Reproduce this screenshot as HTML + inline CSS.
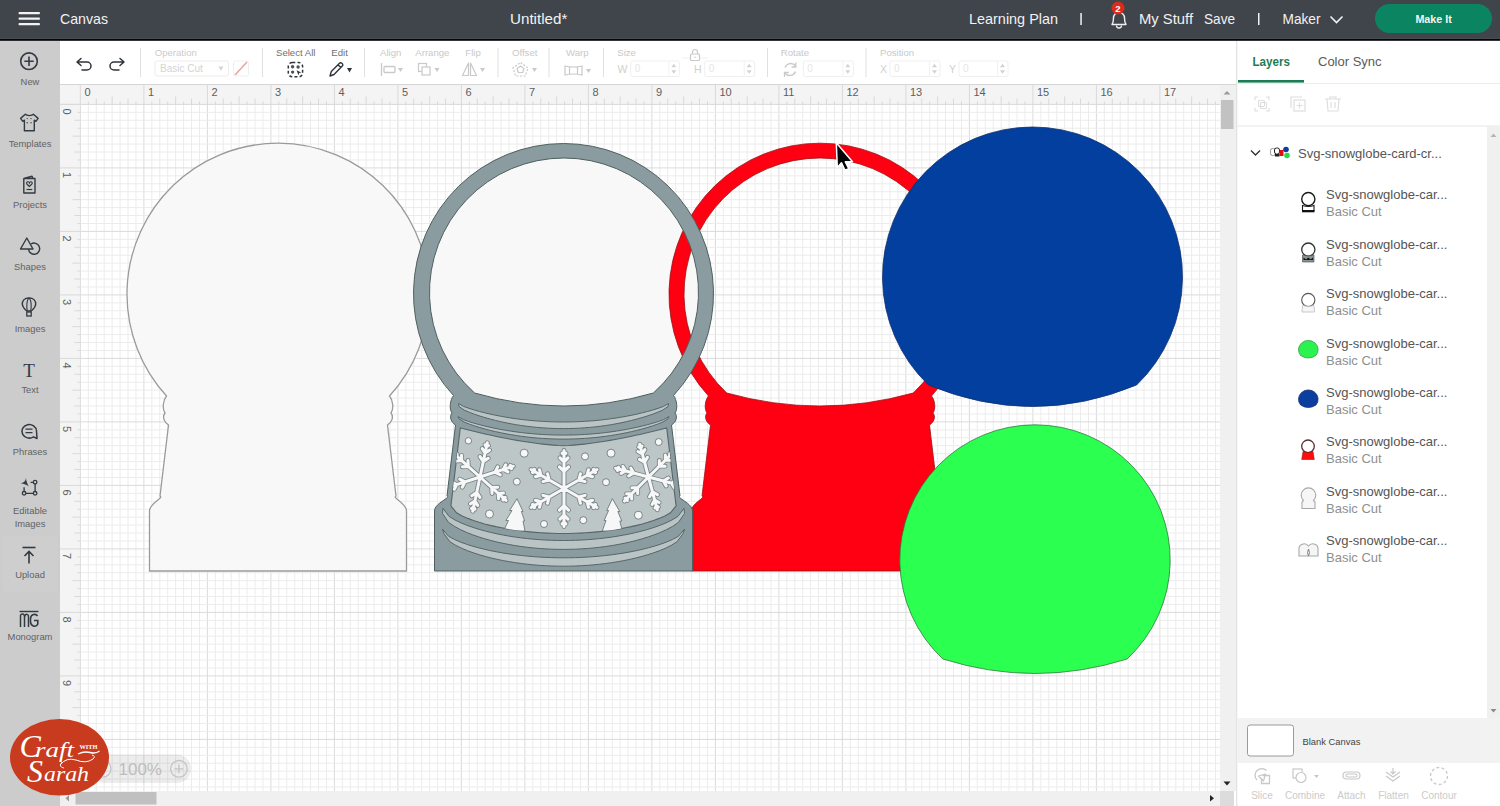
<!DOCTYPE html>
<html><head><meta charset="utf-8">
<style>
*{margin:0;padding:0;box-sizing:border-box}
html,body{width:1500px;height:806px;overflow:hidden;background:#fff;font-family:"Liberation Sans",sans-serif}
.abs{position:absolute}
.tt{position:absolute;color:#f2f2f2;font-size:15px;line-height:15px;top:11px;white-space:nowrap}
.si{position:absolute;left:0;width:60px;text-align:center;font-size:9.4px;line-height:13px;color:#626262;white-space:nowrap}
</style></head><body>
<svg class="abs" style="left:0;top:0" width="1500" height="806" font-family="Liberation Sans, sans-serif">
<rect x="60" y="85" width="1160" height="706" fill="#fff"/>
<line x1="80.40" y1="104.40" x2="80.40" y2="791" stroke="#dbdbdb" stroke-width="1"/>
<line x1="88.34" y1="104.40" x2="88.34" y2="791" stroke="#ececec" stroke-width="1"/>
<line x1="96.28" y1="104.40" x2="96.28" y2="791" stroke="#ececec" stroke-width="1"/>
<line x1="104.21" y1="104.40" x2="104.21" y2="791" stroke="#ececec" stroke-width="1"/>
<line x1="112.15" y1="104.40" x2="112.15" y2="791" stroke="#ececec" stroke-width="1"/>
<line x1="120.09" y1="104.40" x2="120.09" y2="791" stroke="#ececec" stroke-width="1"/>
<line x1="128.03" y1="104.40" x2="128.03" y2="791" stroke="#ececec" stroke-width="1"/>
<line x1="135.96" y1="104.40" x2="135.96" y2="791" stroke="#ececec" stroke-width="1"/>
<line x1="143.90" y1="104.40" x2="143.90" y2="791" stroke="#dbdbdb" stroke-width="1"/>
<line x1="151.84" y1="104.40" x2="151.84" y2="791" stroke="#ececec" stroke-width="1"/>
<line x1="159.78" y1="104.40" x2="159.78" y2="791" stroke="#ececec" stroke-width="1"/>
<line x1="167.71" y1="104.40" x2="167.71" y2="791" stroke="#ececec" stroke-width="1"/>
<line x1="175.65" y1="104.40" x2="175.65" y2="791" stroke="#ececec" stroke-width="1"/>
<line x1="183.59" y1="104.40" x2="183.59" y2="791" stroke="#ececec" stroke-width="1"/>
<line x1="191.53" y1="104.40" x2="191.53" y2="791" stroke="#ececec" stroke-width="1"/>
<line x1="199.46" y1="104.40" x2="199.46" y2="791" stroke="#ececec" stroke-width="1"/>
<line x1="207.40" y1="104.40" x2="207.40" y2="791" stroke="#dbdbdb" stroke-width="1"/>
<line x1="215.34" y1="104.40" x2="215.34" y2="791" stroke="#ececec" stroke-width="1"/>
<line x1="223.28" y1="104.40" x2="223.28" y2="791" stroke="#ececec" stroke-width="1"/>
<line x1="231.21" y1="104.40" x2="231.21" y2="791" stroke="#ececec" stroke-width="1"/>
<line x1="239.15" y1="104.40" x2="239.15" y2="791" stroke="#ececec" stroke-width="1"/>
<line x1="247.09" y1="104.40" x2="247.09" y2="791" stroke="#ececec" stroke-width="1"/>
<line x1="255.03" y1="104.40" x2="255.03" y2="791" stroke="#ececec" stroke-width="1"/>
<line x1="262.96" y1="104.40" x2="262.96" y2="791" stroke="#ececec" stroke-width="1"/>
<line x1="270.90" y1="104.40" x2="270.90" y2="791" stroke="#dbdbdb" stroke-width="1"/>
<line x1="278.84" y1="104.40" x2="278.84" y2="791" stroke="#ececec" stroke-width="1"/>
<line x1="286.77" y1="104.40" x2="286.77" y2="791" stroke="#ececec" stroke-width="1"/>
<line x1="294.71" y1="104.40" x2="294.71" y2="791" stroke="#ececec" stroke-width="1"/>
<line x1="302.65" y1="104.40" x2="302.65" y2="791" stroke="#ececec" stroke-width="1"/>
<line x1="310.59" y1="104.40" x2="310.59" y2="791" stroke="#ececec" stroke-width="1"/>
<line x1="318.52" y1="104.40" x2="318.52" y2="791" stroke="#ececec" stroke-width="1"/>
<line x1="326.46" y1="104.40" x2="326.46" y2="791" stroke="#ececec" stroke-width="1"/>
<line x1="334.40" y1="104.40" x2="334.40" y2="791" stroke="#dbdbdb" stroke-width="1"/>
<line x1="342.34" y1="104.40" x2="342.34" y2="791" stroke="#ececec" stroke-width="1"/>
<line x1="350.27" y1="104.40" x2="350.27" y2="791" stroke="#ececec" stroke-width="1"/>
<line x1="358.21" y1="104.40" x2="358.21" y2="791" stroke="#ececec" stroke-width="1"/>
<line x1="366.15" y1="104.40" x2="366.15" y2="791" stroke="#ececec" stroke-width="1"/>
<line x1="374.09" y1="104.40" x2="374.09" y2="791" stroke="#ececec" stroke-width="1"/>
<line x1="382.02" y1="104.40" x2="382.02" y2="791" stroke="#ececec" stroke-width="1"/>
<line x1="389.96" y1="104.40" x2="389.96" y2="791" stroke="#ececec" stroke-width="1"/>
<line x1="397.90" y1="104.40" x2="397.90" y2="791" stroke="#dbdbdb" stroke-width="1"/>
<line x1="405.84" y1="104.40" x2="405.84" y2="791" stroke="#ececec" stroke-width="1"/>
<line x1="413.77" y1="104.40" x2="413.77" y2="791" stroke="#ececec" stroke-width="1"/>
<line x1="421.71" y1="104.40" x2="421.71" y2="791" stroke="#ececec" stroke-width="1"/>
<line x1="429.65" y1="104.40" x2="429.65" y2="791" stroke="#ececec" stroke-width="1"/>
<line x1="437.59" y1="104.40" x2="437.59" y2="791" stroke="#ececec" stroke-width="1"/>
<line x1="445.52" y1="104.40" x2="445.52" y2="791" stroke="#ececec" stroke-width="1"/>
<line x1="453.46" y1="104.40" x2="453.46" y2="791" stroke="#ececec" stroke-width="1"/>
<line x1="461.40" y1="104.40" x2="461.40" y2="791" stroke="#dbdbdb" stroke-width="1"/>
<line x1="469.34" y1="104.40" x2="469.34" y2="791" stroke="#ececec" stroke-width="1"/>
<line x1="477.27" y1="104.40" x2="477.27" y2="791" stroke="#ececec" stroke-width="1"/>
<line x1="485.21" y1="104.40" x2="485.21" y2="791" stroke="#ececec" stroke-width="1"/>
<line x1="493.15" y1="104.40" x2="493.15" y2="791" stroke="#ececec" stroke-width="1"/>
<line x1="501.09" y1="104.40" x2="501.09" y2="791" stroke="#ececec" stroke-width="1"/>
<line x1="509.02" y1="104.40" x2="509.02" y2="791" stroke="#ececec" stroke-width="1"/>
<line x1="516.96" y1="104.40" x2="516.96" y2="791" stroke="#ececec" stroke-width="1"/>
<line x1="524.90" y1="104.40" x2="524.90" y2="791" stroke="#dbdbdb" stroke-width="1"/>
<line x1="532.84" y1="104.40" x2="532.84" y2="791" stroke="#ececec" stroke-width="1"/>
<line x1="540.77" y1="104.40" x2="540.77" y2="791" stroke="#ececec" stroke-width="1"/>
<line x1="548.71" y1="104.40" x2="548.71" y2="791" stroke="#ececec" stroke-width="1"/>
<line x1="556.65" y1="104.40" x2="556.65" y2="791" stroke="#ececec" stroke-width="1"/>
<line x1="564.59" y1="104.40" x2="564.59" y2="791" stroke="#ececec" stroke-width="1"/>
<line x1="572.52" y1="104.40" x2="572.52" y2="791" stroke="#ececec" stroke-width="1"/>
<line x1="580.46" y1="104.40" x2="580.46" y2="791" stroke="#ececec" stroke-width="1"/>
<line x1="588.40" y1="104.40" x2="588.40" y2="791" stroke="#dbdbdb" stroke-width="1"/>
<line x1="596.34" y1="104.40" x2="596.34" y2="791" stroke="#ececec" stroke-width="1"/>
<line x1="604.27" y1="104.40" x2="604.27" y2="791" stroke="#ececec" stroke-width="1"/>
<line x1="612.21" y1="104.40" x2="612.21" y2="791" stroke="#ececec" stroke-width="1"/>
<line x1="620.15" y1="104.40" x2="620.15" y2="791" stroke="#ececec" stroke-width="1"/>
<line x1="628.09" y1="104.40" x2="628.09" y2="791" stroke="#ececec" stroke-width="1"/>
<line x1="636.02" y1="104.40" x2="636.02" y2="791" stroke="#ececec" stroke-width="1"/>
<line x1="643.96" y1="104.40" x2="643.96" y2="791" stroke="#ececec" stroke-width="1"/>
<line x1="651.90" y1="104.40" x2="651.90" y2="791" stroke="#dbdbdb" stroke-width="1"/>
<line x1="659.84" y1="104.40" x2="659.84" y2="791" stroke="#ececec" stroke-width="1"/>
<line x1="667.77" y1="104.40" x2="667.77" y2="791" stroke="#ececec" stroke-width="1"/>
<line x1="675.71" y1="104.40" x2="675.71" y2="791" stroke="#ececec" stroke-width="1"/>
<line x1="683.65" y1="104.40" x2="683.65" y2="791" stroke="#ececec" stroke-width="1"/>
<line x1="691.59" y1="104.40" x2="691.59" y2="791" stroke="#ececec" stroke-width="1"/>
<line x1="699.52" y1="104.40" x2="699.52" y2="791" stroke="#ececec" stroke-width="1"/>
<line x1="707.46" y1="104.40" x2="707.46" y2="791" stroke="#ececec" stroke-width="1"/>
<line x1="715.40" y1="104.40" x2="715.40" y2="791" stroke="#dbdbdb" stroke-width="1"/>
<line x1="723.34" y1="104.40" x2="723.34" y2="791" stroke="#ececec" stroke-width="1"/>
<line x1="731.27" y1="104.40" x2="731.27" y2="791" stroke="#ececec" stroke-width="1"/>
<line x1="739.21" y1="104.40" x2="739.21" y2="791" stroke="#ececec" stroke-width="1"/>
<line x1="747.15" y1="104.40" x2="747.15" y2="791" stroke="#ececec" stroke-width="1"/>
<line x1="755.09" y1="104.40" x2="755.09" y2="791" stroke="#ececec" stroke-width="1"/>
<line x1="763.02" y1="104.40" x2="763.02" y2="791" stroke="#ececec" stroke-width="1"/>
<line x1="770.96" y1="104.40" x2="770.96" y2="791" stroke="#ececec" stroke-width="1"/>
<line x1="778.90" y1="104.40" x2="778.90" y2="791" stroke="#dbdbdb" stroke-width="1"/>
<line x1="786.84" y1="104.40" x2="786.84" y2="791" stroke="#ececec" stroke-width="1"/>
<line x1="794.77" y1="104.40" x2="794.77" y2="791" stroke="#ececec" stroke-width="1"/>
<line x1="802.71" y1="104.40" x2="802.71" y2="791" stroke="#ececec" stroke-width="1"/>
<line x1="810.65" y1="104.40" x2="810.65" y2="791" stroke="#ececec" stroke-width="1"/>
<line x1="818.59" y1="104.40" x2="818.59" y2="791" stroke="#ececec" stroke-width="1"/>
<line x1="826.52" y1="104.40" x2="826.52" y2="791" stroke="#ececec" stroke-width="1"/>
<line x1="834.46" y1="104.40" x2="834.46" y2="791" stroke="#ececec" stroke-width="1"/>
<line x1="842.40" y1="104.40" x2="842.40" y2="791" stroke="#dbdbdb" stroke-width="1"/>
<line x1="850.34" y1="104.40" x2="850.34" y2="791" stroke="#ececec" stroke-width="1"/>
<line x1="858.27" y1="104.40" x2="858.27" y2="791" stroke="#ececec" stroke-width="1"/>
<line x1="866.21" y1="104.40" x2="866.21" y2="791" stroke="#ececec" stroke-width="1"/>
<line x1="874.15" y1="104.40" x2="874.15" y2="791" stroke="#ececec" stroke-width="1"/>
<line x1="882.09" y1="104.40" x2="882.09" y2="791" stroke="#ececec" stroke-width="1"/>
<line x1="890.02" y1="104.40" x2="890.02" y2="791" stroke="#ececec" stroke-width="1"/>
<line x1="897.96" y1="104.40" x2="897.96" y2="791" stroke="#ececec" stroke-width="1"/>
<line x1="905.90" y1="104.40" x2="905.90" y2="791" stroke="#dbdbdb" stroke-width="1"/>
<line x1="913.84" y1="104.40" x2="913.84" y2="791" stroke="#ececec" stroke-width="1"/>
<line x1="921.77" y1="104.40" x2="921.77" y2="791" stroke="#ececec" stroke-width="1"/>
<line x1="929.71" y1="104.40" x2="929.71" y2="791" stroke="#ececec" stroke-width="1"/>
<line x1="937.65" y1="104.40" x2="937.65" y2="791" stroke="#ececec" stroke-width="1"/>
<line x1="945.59" y1="104.40" x2="945.59" y2="791" stroke="#ececec" stroke-width="1"/>
<line x1="953.52" y1="104.40" x2="953.52" y2="791" stroke="#ececec" stroke-width="1"/>
<line x1="961.46" y1="104.40" x2="961.46" y2="791" stroke="#ececec" stroke-width="1"/>
<line x1="969.40" y1="104.40" x2="969.40" y2="791" stroke="#dbdbdb" stroke-width="1"/>
<line x1="977.34" y1="104.40" x2="977.34" y2="791" stroke="#ececec" stroke-width="1"/>
<line x1="985.27" y1="104.40" x2="985.27" y2="791" stroke="#ececec" stroke-width="1"/>
<line x1="993.21" y1="104.40" x2="993.21" y2="791" stroke="#ececec" stroke-width="1"/>
<line x1="1001.15" y1="104.40" x2="1001.15" y2="791" stroke="#ececec" stroke-width="1"/>
<line x1="1009.09" y1="104.40" x2="1009.09" y2="791" stroke="#ececec" stroke-width="1"/>
<line x1="1017.02" y1="104.40" x2="1017.02" y2="791" stroke="#ececec" stroke-width="1"/>
<line x1="1024.96" y1="104.40" x2="1024.96" y2="791" stroke="#ececec" stroke-width="1"/>
<line x1="1032.90" y1="104.40" x2="1032.90" y2="791" stroke="#dbdbdb" stroke-width="1"/>
<line x1="1040.84" y1="104.40" x2="1040.84" y2="791" stroke="#ececec" stroke-width="1"/>
<line x1="1048.78" y1="104.40" x2="1048.78" y2="791" stroke="#ececec" stroke-width="1"/>
<line x1="1056.71" y1="104.40" x2="1056.71" y2="791" stroke="#ececec" stroke-width="1"/>
<line x1="1064.65" y1="104.40" x2="1064.65" y2="791" stroke="#ececec" stroke-width="1"/>
<line x1="1072.59" y1="104.40" x2="1072.59" y2="791" stroke="#ececec" stroke-width="1"/>
<line x1="1080.53" y1="104.40" x2="1080.53" y2="791" stroke="#ececec" stroke-width="1"/>
<line x1="1088.46" y1="104.40" x2="1088.46" y2="791" stroke="#ececec" stroke-width="1"/>
<line x1="1096.40" y1="104.40" x2="1096.40" y2="791" stroke="#dbdbdb" stroke-width="1"/>
<line x1="1104.34" y1="104.40" x2="1104.34" y2="791" stroke="#ececec" stroke-width="1"/>
<line x1="1112.28" y1="104.40" x2="1112.28" y2="791" stroke="#ececec" stroke-width="1"/>
<line x1="1120.21" y1="104.40" x2="1120.21" y2="791" stroke="#ececec" stroke-width="1"/>
<line x1="1128.15" y1="104.40" x2="1128.15" y2="791" stroke="#ececec" stroke-width="1"/>
<line x1="1136.09" y1="104.40" x2="1136.09" y2="791" stroke="#ececec" stroke-width="1"/>
<line x1="1144.03" y1="104.40" x2="1144.03" y2="791" stroke="#ececec" stroke-width="1"/>
<line x1="1151.96" y1="104.40" x2="1151.96" y2="791" stroke="#ececec" stroke-width="1"/>
<line x1="1159.90" y1="104.40" x2="1159.90" y2="791" stroke="#dbdbdb" stroke-width="1"/>
<line x1="1167.84" y1="104.40" x2="1167.84" y2="791" stroke="#ececec" stroke-width="1"/>
<line x1="1175.78" y1="104.40" x2="1175.78" y2="791" stroke="#ececec" stroke-width="1"/>
<line x1="1183.71" y1="104.40" x2="1183.71" y2="791" stroke="#ececec" stroke-width="1"/>
<line x1="1191.65" y1="104.40" x2="1191.65" y2="791" stroke="#ececec" stroke-width="1"/>
<line x1="1199.59" y1="104.40" x2="1199.59" y2="791" stroke="#ececec" stroke-width="1"/>
<line x1="1207.53" y1="104.40" x2="1207.53" y2="791" stroke="#ececec" stroke-width="1"/>
<line x1="1215.46" y1="104.40" x2="1215.46" y2="791" stroke="#ececec" stroke-width="1"/>
<line x1="80.40" y1="104.40" x2="1220" y2="104.40" stroke="#dbdbdb" stroke-width="1"/>
<line x1="80.40" y1="112.34" x2="1220" y2="112.34" stroke="#ececec" stroke-width="1"/>
<line x1="80.40" y1="120.28" x2="1220" y2="120.28" stroke="#ececec" stroke-width="1"/>
<line x1="80.40" y1="128.21" x2="1220" y2="128.21" stroke="#ececec" stroke-width="1"/>
<line x1="80.40" y1="136.15" x2="1220" y2="136.15" stroke="#ececec" stroke-width="1"/>
<line x1="80.40" y1="144.09" x2="1220" y2="144.09" stroke="#ececec" stroke-width="1"/>
<line x1="80.40" y1="152.03" x2="1220" y2="152.03" stroke="#ececec" stroke-width="1"/>
<line x1="80.40" y1="159.96" x2="1220" y2="159.96" stroke="#ececec" stroke-width="1"/>
<line x1="80.40" y1="167.90" x2="1220" y2="167.90" stroke="#dbdbdb" stroke-width="1"/>
<line x1="80.40" y1="175.84" x2="1220" y2="175.84" stroke="#ececec" stroke-width="1"/>
<line x1="80.40" y1="183.78" x2="1220" y2="183.78" stroke="#ececec" stroke-width="1"/>
<line x1="80.40" y1="191.71" x2="1220" y2="191.71" stroke="#ececec" stroke-width="1"/>
<line x1="80.40" y1="199.65" x2="1220" y2="199.65" stroke="#ececec" stroke-width="1"/>
<line x1="80.40" y1="207.59" x2="1220" y2="207.59" stroke="#ececec" stroke-width="1"/>
<line x1="80.40" y1="215.53" x2="1220" y2="215.53" stroke="#ececec" stroke-width="1"/>
<line x1="80.40" y1="223.46" x2="1220" y2="223.46" stroke="#ececec" stroke-width="1"/>
<line x1="80.40" y1="231.40" x2="1220" y2="231.40" stroke="#dbdbdb" stroke-width="1"/>
<line x1="80.40" y1="239.34" x2="1220" y2="239.34" stroke="#ececec" stroke-width="1"/>
<line x1="80.40" y1="247.28" x2="1220" y2="247.28" stroke="#ececec" stroke-width="1"/>
<line x1="80.40" y1="255.21" x2="1220" y2="255.21" stroke="#ececec" stroke-width="1"/>
<line x1="80.40" y1="263.15" x2="1220" y2="263.15" stroke="#ececec" stroke-width="1"/>
<line x1="80.40" y1="271.09" x2="1220" y2="271.09" stroke="#ececec" stroke-width="1"/>
<line x1="80.40" y1="279.02" x2="1220" y2="279.02" stroke="#ececec" stroke-width="1"/>
<line x1="80.40" y1="286.96" x2="1220" y2="286.96" stroke="#ececec" stroke-width="1"/>
<line x1="80.40" y1="294.90" x2="1220" y2="294.90" stroke="#dbdbdb" stroke-width="1"/>
<line x1="80.40" y1="302.84" x2="1220" y2="302.84" stroke="#ececec" stroke-width="1"/>
<line x1="80.40" y1="310.77" x2="1220" y2="310.77" stroke="#ececec" stroke-width="1"/>
<line x1="80.40" y1="318.71" x2="1220" y2="318.71" stroke="#ececec" stroke-width="1"/>
<line x1="80.40" y1="326.65" x2="1220" y2="326.65" stroke="#ececec" stroke-width="1"/>
<line x1="80.40" y1="334.59" x2="1220" y2="334.59" stroke="#ececec" stroke-width="1"/>
<line x1="80.40" y1="342.52" x2="1220" y2="342.52" stroke="#ececec" stroke-width="1"/>
<line x1="80.40" y1="350.46" x2="1220" y2="350.46" stroke="#ececec" stroke-width="1"/>
<line x1="80.40" y1="358.40" x2="1220" y2="358.40" stroke="#dbdbdb" stroke-width="1"/>
<line x1="80.40" y1="366.34" x2="1220" y2="366.34" stroke="#ececec" stroke-width="1"/>
<line x1="80.40" y1="374.27" x2="1220" y2="374.27" stroke="#ececec" stroke-width="1"/>
<line x1="80.40" y1="382.21" x2="1220" y2="382.21" stroke="#ececec" stroke-width="1"/>
<line x1="80.40" y1="390.15" x2="1220" y2="390.15" stroke="#ececec" stroke-width="1"/>
<line x1="80.40" y1="398.09" x2="1220" y2="398.09" stroke="#ececec" stroke-width="1"/>
<line x1="80.40" y1="406.02" x2="1220" y2="406.02" stroke="#ececec" stroke-width="1"/>
<line x1="80.40" y1="413.96" x2="1220" y2="413.96" stroke="#ececec" stroke-width="1"/>
<line x1="80.40" y1="421.90" x2="1220" y2="421.90" stroke="#dbdbdb" stroke-width="1"/>
<line x1="80.40" y1="429.84" x2="1220" y2="429.84" stroke="#ececec" stroke-width="1"/>
<line x1="80.40" y1="437.77" x2="1220" y2="437.77" stroke="#ececec" stroke-width="1"/>
<line x1="80.40" y1="445.71" x2="1220" y2="445.71" stroke="#ececec" stroke-width="1"/>
<line x1="80.40" y1="453.65" x2="1220" y2="453.65" stroke="#ececec" stroke-width="1"/>
<line x1="80.40" y1="461.59" x2="1220" y2="461.59" stroke="#ececec" stroke-width="1"/>
<line x1="80.40" y1="469.52" x2="1220" y2="469.52" stroke="#ececec" stroke-width="1"/>
<line x1="80.40" y1="477.46" x2="1220" y2="477.46" stroke="#ececec" stroke-width="1"/>
<line x1="80.40" y1="485.40" x2="1220" y2="485.40" stroke="#dbdbdb" stroke-width="1"/>
<line x1="80.40" y1="493.34" x2="1220" y2="493.34" stroke="#ececec" stroke-width="1"/>
<line x1="80.40" y1="501.27" x2="1220" y2="501.27" stroke="#ececec" stroke-width="1"/>
<line x1="80.40" y1="509.21" x2="1220" y2="509.21" stroke="#ececec" stroke-width="1"/>
<line x1="80.40" y1="517.15" x2="1220" y2="517.15" stroke="#ececec" stroke-width="1"/>
<line x1="80.40" y1="525.09" x2="1220" y2="525.09" stroke="#ececec" stroke-width="1"/>
<line x1="80.40" y1="533.02" x2="1220" y2="533.02" stroke="#ececec" stroke-width="1"/>
<line x1="80.40" y1="540.96" x2="1220" y2="540.96" stroke="#ececec" stroke-width="1"/>
<line x1="80.40" y1="548.90" x2="1220" y2="548.90" stroke="#dbdbdb" stroke-width="1"/>
<line x1="80.40" y1="556.84" x2="1220" y2="556.84" stroke="#ececec" stroke-width="1"/>
<line x1="80.40" y1="564.77" x2="1220" y2="564.77" stroke="#ececec" stroke-width="1"/>
<line x1="80.40" y1="572.71" x2="1220" y2="572.71" stroke="#ececec" stroke-width="1"/>
<line x1="80.40" y1="580.65" x2="1220" y2="580.65" stroke="#ececec" stroke-width="1"/>
<line x1="80.40" y1="588.59" x2="1220" y2="588.59" stroke="#ececec" stroke-width="1"/>
<line x1="80.40" y1="596.52" x2="1220" y2="596.52" stroke="#ececec" stroke-width="1"/>
<line x1="80.40" y1="604.46" x2="1220" y2="604.46" stroke="#ececec" stroke-width="1"/>
<line x1="80.40" y1="612.40" x2="1220" y2="612.40" stroke="#dbdbdb" stroke-width="1"/>
<line x1="80.40" y1="620.34" x2="1220" y2="620.34" stroke="#ececec" stroke-width="1"/>
<line x1="80.40" y1="628.27" x2="1220" y2="628.27" stroke="#ececec" stroke-width="1"/>
<line x1="80.40" y1="636.21" x2="1220" y2="636.21" stroke="#ececec" stroke-width="1"/>
<line x1="80.40" y1="644.15" x2="1220" y2="644.15" stroke="#ececec" stroke-width="1"/>
<line x1="80.40" y1="652.09" x2="1220" y2="652.09" stroke="#ececec" stroke-width="1"/>
<line x1="80.40" y1="660.02" x2="1220" y2="660.02" stroke="#ececec" stroke-width="1"/>
<line x1="80.40" y1="667.96" x2="1220" y2="667.96" stroke="#ececec" stroke-width="1"/>
<line x1="80.40" y1="675.90" x2="1220" y2="675.90" stroke="#dbdbdb" stroke-width="1"/>
<line x1="80.40" y1="683.84" x2="1220" y2="683.84" stroke="#ececec" stroke-width="1"/>
<line x1="80.40" y1="691.77" x2="1220" y2="691.77" stroke="#ececec" stroke-width="1"/>
<line x1="80.40" y1="699.71" x2="1220" y2="699.71" stroke="#ececec" stroke-width="1"/>
<line x1="80.40" y1="707.65" x2="1220" y2="707.65" stroke="#ececec" stroke-width="1"/>
<line x1="80.40" y1="715.59" x2="1220" y2="715.59" stroke="#ececec" stroke-width="1"/>
<line x1="80.40" y1="723.52" x2="1220" y2="723.52" stroke="#ececec" stroke-width="1"/>
<line x1="80.40" y1="731.46" x2="1220" y2="731.46" stroke="#ececec" stroke-width="1"/>
<line x1="80.40" y1="739.40" x2="1220" y2="739.40" stroke="#dbdbdb" stroke-width="1"/>
<line x1="80.40" y1="747.34" x2="1220" y2="747.34" stroke="#ececec" stroke-width="1"/>
<line x1="80.40" y1="755.27" x2="1220" y2="755.27" stroke="#ececec" stroke-width="1"/>
<line x1="80.40" y1="763.21" x2="1220" y2="763.21" stroke="#ececec" stroke-width="1"/>
<line x1="80.40" y1="771.15" x2="1220" y2="771.15" stroke="#ececec" stroke-width="1"/>
<line x1="80.40" y1="779.09" x2="1220" y2="779.09" stroke="#ececec" stroke-width="1"/>
<line x1="80.40" y1="787.02" x2="1220" y2="787.02" stroke="#ececec" stroke-width="1"/>
<rect x="60" y="85" width="1160" height="19.40" fill="#f4f4f4"/>
<rect x="60" y="85" width="20.40" height="706" fill="#f4f4f4"/>
<line x1="80.40" y1="85.00" x2="80.40" y2="104.40" stroke="#d9d9d9" stroke-width="1"/>
<text x="84.40" y="96" font-size="11" fill="#5e5e5e">0</text>
<line x1="88.34" y1="101.40" x2="88.34" y2="104.40" stroke="#d9d9d9" stroke-width="1"/>
<line x1="96.28" y1="98.40" x2="96.28" y2="104.40" stroke="#d9d9d9" stroke-width="1"/>
<line x1="104.21" y1="101.40" x2="104.21" y2="104.40" stroke="#d9d9d9" stroke-width="1"/>
<line x1="112.15" y1="96.40" x2="112.15" y2="104.40" stroke="#d9d9d9" stroke-width="1"/>
<line x1="120.09" y1="101.40" x2="120.09" y2="104.40" stroke="#d9d9d9" stroke-width="1"/>
<line x1="128.03" y1="98.40" x2="128.03" y2="104.40" stroke="#d9d9d9" stroke-width="1"/>
<line x1="135.96" y1="101.40" x2="135.96" y2="104.40" stroke="#d9d9d9" stroke-width="1"/>
<line x1="143.90" y1="85.00" x2="143.90" y2="104.40" stroke="#d9d9d9" stroke-width="1"/>
<text x="147.90" y="96" font-size="11" fill="#5e5e5e">1</text>
<line x1="151.84" y1="101.40" x2="151.84" y2="104.40" stroke="#d9d9d9" stroke-width="1"/>
<line x1="159.78" y1="98.40" x2="159.78" y2="104.40" stroke="#d9d9d9" stroke-width="1"/>
<line x1="167.71" y1="101.40" x2="167.71" y2="104.40" stroke="#d9d9d9" stroke-width="1"/>
<line x1="175.65" y1="96.40" x2="175.65" y2="104.40" stroke="#d9d9d9" stroke-width="1"/>
<line x1="183.59" y1="101.40" x2="183.59" y2="104.40" stroke="#d9d9d9" stroke-width="1"/>
<line x1="191.53" y1="98.40" x2="191.53" y2="104.40" stroke="#d9d9d9" stroke-width="1"/>
<line x1="199.46" y1="101.40" x2="199.46" y2="104.40" stroke="#d9d9d9" stroke-width="1"/>
<line x1="207.40" y1="85.00" x2="207.40" y2="104.40" stroke="#d9d9d9" stroke-width="1"/>
<text x="211.40" y="96" font-size="11" fill="#5e5e5e">2</text>
<line x1="215.34" y1="101.40" x2="215.34" y2="104.40" stroke="#d9d9d9" stroke-width="1"/>
<line x1="223.28" y1="98.40" x2="223.28" y2="104.40" stroke="#d9d9d9" stroke-width="1"/>
<line x1="231.21" y1="101.40" x2="231.21" y2="104.40" stroke="#d9d9d9" stroke-width="1"/>
<line x1="239.15" y1="96.40" x2="239.15" y2="104.40" stroke="#d9d9d9" stroke-width="1"/>
<line x1="247.09" y1="101.40" x2="247.09" y2="104.40" stroke="#d9d9d9" stroke-width="1"/>
<line x1="255.03" y1="98.40" x2="255.03" y2="104.40" stroke="#d9d9d9" stroke-width="1"/>
<line x1="262.96" y1="101.40" x2="262.96" y2="104.40" stroke="#d9d9d9" stroke-width="1"/>
<line x1="270.90" y1="85.00" x2="270.90" y2="104.40" stroke="#d9d9d9" stroke-width="1"/>
<text x="274.90" y="96" font-size="11" fill="#5e5e5e">3</text>
<line x1="278.84" y1="101.40" x2="278.84" y2="104.40" stroke="#d9d9d9" stroke-width="1"/>
<line x1="286.77" y1="98.40" x2="286.77" y2="104.40" stroke="#d9d9d9" stroke-width="1"/>
<line x1="294.71" y1="101.40" x2="294.71" y2="104.40" stroke="#d9d9d9" stroke-width="1"/>
<line x1="302.65" y1="96.40" x2="302.65" y2="104.40" stroke="#d9d9d9" stroke-width="1"/>
<line x1="310.59" y1="101.40" x2="310.59" y2="104.40" stroke="#d9d9d9" stroke-width="1"/>
<line x1="318.52" y1="98.40" x2="318.52" y2="104.40" stroke="#d9d9d9" stroke-width="1"/>
<line x1="326.46" y1="101.40" x2="326.46" y2="104.40" stroke="#d9d9d9" stroke-width="1"/>
<line x1="334.40" y1="85.00" x2="334.40" y2="104.40" stroke="#d9d9d9" stroke-width="1"/>
<text x="338.40" y="96" font-size="11" fill="#5e5e5e">4</text>
<line x1="342.34" y1="101.40" x2="342.34" y2="104.40" stroke="#d9d9d9" stroke-width="1"/>
<line x1="350.27" y1="98.40" x2="350.27" y2="104.40" stroke="#d9d9d9" stroke-width="1"/>
<line x1="358.21" y1="101.40" x2="358.21" y2="104.40" stroke="#d9d9d9" stroke-width="1"/>
<line x1="366.15" y1="96.40" x2="366.15" y2="104.40" stroke="#d9d9d9" stroke-width="1"/>
<line x1="374.09" y1="101.40" x2="374.09" y2="104.40" stroke="#d9d9d9" stroke-width="1"/>
<line x1="382.02" y1="98.40" x2="382.02" y2="104.40" stroke="#d9d9d9" stroke-width="1"/>
<line x1="389.96" y1="101.40" x2="389.96" y2="104.40" stroke="#d9d9d9" stroke-width="1"/>
<line x1="397.90" y1="85.00" x2="397.90" y2="104.40" stroke="#d9d9d9" stroke-width="1"/>
<text x="401.90" y="96" font-size="11" fill="#5e5e5e">5</text>
<line x1="405.84" y1="101.40" x2="405.84" y2="104.40" stroke="#d9d9d9" stroke-width="1"/>
<line x1="413.77" y1="98.40" x2="413.77" y2="104.40" stroke="#d9d9d9" stroke-width="1"/>
<line x1="421.71" y1="101.40" x2="421.71" y2="104.40" stroke="#d9d9d9" stroke-width="1"/>
<line x1="429.65" y1="96.40" x2="429.65" y2="104.40" stroke="#d9d9d9" stroke-width="1"/>
<line x1="437.59" y1="101.40" x2="437.59" y2="104.40" stroke="#d9d9d9" stroke-width="1"/>
<line x1="445.52" y1="98.40" x2="445.52" y2="104.40" stroke="#d9d9d9" stroke-width="1"/>
<line x1="453.46" y1="101.40" x2="453.46" y2="104.40" stroke="#d9d9d9" stroke-width="1"/>
<line x1="461.40" y1="85.00" x2="461.40" y2="104.40" stroke="#d9d9d9" stroke-width="1"/>
<text x="465.40" y="96" font-size="11" fill="#5e5e5e">6</text>
<line x1="469.34" y1="101.40" x2="469.34" y2="104.40" stroke="#d9d9d9" stroke-width="1"/>
<line x1="477.27" y1="98.40" x2="477.27" y2="104.40" stroke="#d9d9d9" stroke-width="1"/>
<line x1="485.21" y1="101.40" x2="485.21" y2="104.40" stroke="#d9d9d9" stroke-width="1"/>
<line x1="493.15" y1="96.40" x2="493.15" y2="104.40" stroke="#d9d9d9" stroke-width="1"/>
<line x1="501.09" y1="101.40" x2="501.09" y2="104.40" stroke="#d9d9d9" stroke-width="1"/>
<line x1="509.02" y1="98.40" x2="509.02" y2="104.40" stroke="#d9d9d9" stroke-width="1"/>
<line x1="516.96" y1="101.40" x2="516.96" y2="104.40" stroke="#d9d9d9" stroke-width="1"/>
<line x1="524.90" y1="85.00" x2="524.90" y2="104.40" stroke="#d9d9d9" stroke-width="1"/>
<text x="528.90" y="96" font-size="11" fill="#5e5e5e">7</text>
<line x1="532.84" y1="101.40" x2="532.84" y2="104.40" stroke="#d9d9d9" stroke-width="1"/>
<line x1="540.77" y1="98.40" x2="540.77" y2="104.40" stroke="#d9d9d9" stroke-width="1"/>
<line x1="548.71" y1="101.40" x2="548.71" y2="104.40" stroke="#d9d9d9" stroke-width="1"/>
<line x1="556.65" y1="96.40" x2="556.65" y2="104.40" stroke="#d9d9d9" stroke-width="1"/>
<line x1="564.59" y1="101.40" x2="564.59" y2="104.40" stroke="#d9d9d9" stroke-width="1"/>
<line x1="572.52" y1="98.40" x2="572.52" y2="104.40" stroke="#d9d9d9" stroke-width="1"/>
<line x1="580.46" y1="101.40" x2="580.46" y2="104.40" stroke="#d9d9d9" stroke-width="1"/>
<line x1="588.40" y1="85.00" x2="588.40" y2="104.40" stroke="#d9d9d9" stroke-width="1"/>
<text x="592.40" y="96" font-size="11" fill="#5e5e5e">8</text>
<line x1="596.34" y1="101.40" x2="596.34" y2="104.40" stroke="#d9d9d9" stroke-width="1"/>
<line x1="604.27" y1="98.40" x2="604.27" y2="104.40" stroke="#d9d9d9" stroke-width="1"/>
<line x1="612.21" y1="101.40" x2="612.21" y2="104.40" stroke="#d9d9d9" stroke-width="1"/>
<line x1="620.15" y1="96.40" x2="620.15" y2="104.40" stroke="#d9d9d9" stroke-width="1"/>
<line x1="628.09" y1="101.40" x2="628.09" y2="104.40" stroke="#d9d9d9" stroke-width="1"/>
<line x1="636.02" y1="98.40" x2="636.02" y2="104.40" stroke="#d9d9d9" stroke-width="1"/>
<line x1="643.96" y1="101.40" x2="643.96" y2="104.40" stroke="#d9d9d9" stroke-width="1"/>
<line x1="651.90" y1="85.00" x2="651.90" y2="104.40" stroke="#d9d9d9" stroke-width="1"/>
<text x="655.90" y="96" font-size="11" fill="#5e5e5e">9</text>
<line x1="659.84" y1="101.40" x2="659.84" y2="104.40" stroke="#d9d9d9" stroke-width="1"/>
<line x1="667.77" y1="98.40" x2="667.77" y2="104.40" stroke="#d9d9d9" stroke-width="1"/>
<line x1="675.71" y1="101.40" x2="675.71" y2="104.40" stroke="#d9d9d9" stroke-width="1"/>
<line x1="683.65" y1="96.40" x2="683.65" y2="104.40" stroke="#d9d9d9" stroke-width="1"/>
<line x1="691.59" y1="101.40" x2="691.59" y2="104.40" stroke="#d9d9d9" stroke-width="1"/>
<line x1="699.52" y1="98.40" x2="699.52" y2="104.40" stroke="#d9d9d9" stroke-width="1"/>
<line x1="707.46" y1="101.40" x2="707.46" y2="104.40" stroke="#d9d9d9" stroke-width="1"/>
<line x1="715.40" y1="85.00" x2="715.40" y2="104.40" stroke="#d9d9d9" stroke-width="1"/>
<text x="719.40" y="96" font-size="11" fill="#5e5e5e">10</text>
<line x1="723.34" y1="101.40" x2="723.34" y2="104.40" stroke="#d9d9d9" stroke-width="1"/>
<line x1="731.27" y1="98.40" x2="731.27" y2="104.40" stroke="#d9d9d9" stroke-width="1"/>
<line x1="739.21" y1="101.40" x2="739.21" y2="104.40" stroke="#d9d9d9" stroke-width="1"/>
<line x1="747.15" y1="96.40" x2="747.15" y2="104.40" stroke="#d9d9d9" stroke-width="1"/>
<line x1="755.09" y1="101.40" x2="755.09" y2="104.40" stroke="#d9d9d9" stroke-width="1"/>
<line x1="763.02" y1="98.40" x2="763.02" y2="104.40" stroke="#d9d9d9" stroke-width="1"/>
<line x1="770.96" y1="101.40" x2="770.96" y2="104.40" stroke="#d9d9d9" stroke-width="1"/>
<line x1="778.90" y1="85.00" x2="778.90" y2="104.40" stroke="#d9d9d9" stroke-width="1"/>
<text x="782.90" y="96" font-size="11" fill="#5e5e5e">11</text>
<line x1="786.84" y1="101.40" x2="786.84" y2="104.40" stroke="#d9d9d9" stroke-width="1"/>
<line x1="794.77" y1="98.40" x2="794.77" y2="104.40" stroke="#d9d9d9" stroke-width="1"/>
<line x1="802.71" y1="101.40" x2="802.71" y2="104.40" stroke="#d9d9d9" stroke-width="1"/>
<line x1="810.65" y1="96.40" x2="810.65" y2="104.40" stroke="#d9d9d9" stroke-width="1"/>
<line x1="818.59" y1="101.40" x2="818.59" y2="104.40" stroke="#d9d9d9" stroke-width="1"/>
<line x1="826.52" y1="98.40" x2="826.52" y2="104.40" stroke="#d9d9d9" stroke-width="1"/>
<line x1="834.46" y1="101.40" x2="834.46" y2="104.40" stroke="#d9d9d9" stroke-width="1"/>
<line x1="842.40" y1="85.00" x2="842.40" y2="104.40" stroke="#d9d9d9" stroke-width="1"/>
<text x="846.40" y="96" font-size="11" fill="#5e5e5e">12</text>
<line x1="850.34" y1="101.40" x2="850.34" y2="104.40" stroke="#d9d9d9" stroke-width="1"/>
<line x1="858.27" y1="98.40" x2="858.27" y2="104.40" stroke="#d9d9d9" stroke-width="1"/>
<line x1="866.21" y1="101.40" x2="866.21" y2="104.40" stroke="#d9d9d9" stroke-width="1"/>
<line x1="874.15" y1="96.40" x2="874.15" y2="104.40" stroke="#d9d9d9" stroke-width="1"/>
<line x1="882.09" y1="101.40" x2="882.09" y2="104.40" stroke="#d9d9d9" stroke-width="1"/>
<line x1="890.02" y1="98.40" x2="890.02" y2="104.40" stroke="#d9d9d9" stroke-width="1"/>
<line x1="897.96" y1="101.40" x2="897.96" y2="104.40" stroke="#d9d9d9" stroke-width="1"/>
<line x1="905.90" y1="85.00" x2="905.90" y2="104.40" stroke="#d9d9d9" stroke-width="1"/>
<text x="909.90" y="96" font-size="11" fill="#5e5e5e">13</text>
<line x1="913.84" y1="101.40" x2="913.84" y2="104.40" stroke="#d9d9d9" stroke-width="1"/>
<line x1="921.77" y1="98.40" x2="921.77" y2="104.40" stroke="#d9d9d9" stroke-width="1"/>
<line x1="929.71" y1="101.40" x2="929.71" y2="104.40" stroke="#d9d9d9" stroke-width="1"/>
<line x1="937.65" y1="96.40" x2="937.65" y2="104.40" stroke="#d9d9d9" stroke-width="1"/>
<line x1="945.59" y1="101.40" x2="945.59" y2="104.40" stroke="#d9d9d9" stroke-width="1"/>
<line x1="953.52" y1="98.40" x2="953.52" y2="104.40" stroke="#d9d9d9" stroke-width="1"/>
<line x1="961.46" y1="101.40" x2="961.46" y2="104.40" stroke="#d9d9d9" stroke-width="1"/>
<line x1="969.40" y1="85.00" x2="969.40" y2="104.40" stroke="#d9d9d9" stroke-width="1"/>
<text x="973.40" y="96" font-size="11" fill="#5e5e5e">14</text>
<line x1="977.34" y1="101.40" x2="977.34" y2="104.40" stroke="#d9d9d9" stroke-width="1"/>
<line x1="985.27" y1="98.40" x2="985.27" y2="104.40" stroke="#d9d9d9" stroke-width="1"/>
<line x1="993.21" y1="101.40" x2="993.21" y2="104.40" stroke="#d9d9d9" stroke-width="1"/>
<line x1="1001.15" y1="96.40" x2="1001.15" y2="104.40" stroke="#d9d9d9" stroke-width="1"/>
<line x1="1009.09" y1="101.40" x2="1009.09" y2="104.40" stroke="#d9d9d9" stroke-width="1"/>
<line x1="1017.02" y1="98.40" x2="1017.02" y2="104.40" stroke="#d9d9d9" stroke-width="1"/>
<line x1="1024.96" y1="101.40" x2="1024.96" y2="104.40" stroke="#d9d9d9" stroke-width="1"/>
<line x1="1032.90" y1="85.00" x2="1032.90" y2="104.40" stroke="#d9d9d9" stroke-width="1"/>
<text x="1036.90" y="96" font-size="11" fill="#5e5e5e">15</text>
<line x1="1040.84" y1="101.40" x2="1040.84" y2="104.40" stroke="#d9d9d9" stroke-width="1"/>
<line x1="1048.78" y1="98.40" x2="1048.78" y2="104.40" stroke="#d9d9d9" stroke-width="1"/>
<line x1="1056.71" y1="101.40" x2="1056.71" y2="104.40" stroke="#d9d9d9" stroke-width="1"/>
<line x1="1064.65" y1="96.40" x2="1064.65" y2="104.40" stroke="#d9d9d9" stroke-width="1"/>
<line x1="1072.59" y1="101.40" x2="1072.59" y2="104.40" stroke="#d9d9d9" stroke-width="1"/>
<line x1="1080.53" y1="98.40" x2="1080.53" y2="104.40" stroke="#d9d9d9" stroke-width="1"/>
<line x1="1088.46" y1="101.40" x2="1088.46" y2="104.40" stroke="#d9d9d9" stroke-width="1"/>
<line x1="1096.40" y1="85.00" x2="1096.40" y2="104.40" stroke="#d9d9d9" stroke-width="1"/>
<text x="1100.40" y="96" font-size="11" fill="#5e5e5e">16</text>
<line x1="1104.34" y1="101.40" x2="1104.34" y2="104.40" stroke="#d9d9d9" stroke-width="1"/>
<line x1="1112.28" y1="98.40" x2="1112.28" y2="104.40" stroke="#d9d9d9" stroke-width="1"/>
<line x1="1120.21" y1="101.40" x2="1120.21" y2="104.40" stroke="#d9d9d9" stroke-width="1"/>
<line x1="1128.15" y1="96.40" x2="1128.15" y2="104.40" stroke="#d9d9d9" stroke-width="1"/>
<line x1="1136.09" y1="101.40" x2="1136.09" y2="104.40" stroke="#d9d9d9" stroke-width="1"/>
<line x1="1144.03" y1="98.40" x2="1144.03" y2="104.40" stroke="#d9d9d9" stroke-width="1"/>
<line x1="1151.96" y1="101.40" x2="1151.96" y2="104.40" stroke="#d9d9d9" stroke-width="1"/>
<line x1="1159.90" y1="85.00" x2="1159.90" y2="104.40" stroke="#d9d9d9" stroke-width="1"/>
<text x="1163.90" y="96" font-size="11" fill="#5e5e5e">17</text>
<line x1="1167.84" y1="101.40" x2="1167.84" y2="104.40" stroke="#d9d9d9" stroke-width="1"/>
<line x1="1175.78" y1="98.40" x2="1175.78" y2="104.40" stroke="#d9d9d9" stroke-width="1"/>
<line x1="1183.71" y1="101.40" x2="1183.71" y2="104.40" stroke="#d9d9d9" stroke-width="1"/>
<line x1="1191.65" y1="96.40" x2="1191.65" y2="104.40" stroke="#d9d9d9" stroke-width="1"/>
<line x1="1199.59" y1="101.40" x2="1199.59" y2="104.40" stroke="#d9d9d9" stroke-width="1"/>
<line x1="1207.53" y1="98.40" x2="1207.53" y2="104.40" stroke="#d9d9d9" stroke-width="1"/>
<line x1="1215.46" y1="101.40" x2="1215.46" y2="104.40" stroke="#d9d9d9" stroke-width="1"/>
<line x1="60.00" y1="104.40" x2="80.40" y2="104.40" stroke="#d9d9d9" stroke-width="1"/>
<text x="0" y="0" font-size="11" fill="#5e5e5e" transform="translate(62.8 108.40) rotate(90)">0</text>
<line x1="77.40" y1="112.34" x2="80.40" y2="112.34" stroke="#d9d9d9" stroke-width="1"/>
<line x1="74.40" y1="120.28" x2="80.40" y2="120.28" stroke="#d9d9d9" stroke-width="1"/>
<line x1="77.40" y1="128.21" x2="80.40" y2="128.21" stroke="#d9d9d9" stroke-width="1"/>
<line x1="72.40" y1="136.15" x2="80.40" y2="136.15" stroke="#d9d9d9" stroke-width="1"/>
<line x1="77.40" y1="144.09" x2="80.40" y2="144.09" stroke="#d9d9d9" stroke-width="1"/>
<line x1="74.40" y1="152.03" x2="80.40" y2="152.03" stroke="#d9d9d9" stroke-width="1"/>
<line x1="77.40" y1="159.96" x2="80.40" y2="159.96" stroke="#d9d9d9" stroke-width="1"/>
<line x1="60.00" y1="167.90" x2="80.40" y2="167.90" stroke="#d9d9d9" stroke-width="1"/>
<text x="0" y="0" font-size="11" fill="#5e5e5e" transform="translate(62.8 171.90) rotate(90)">1</text>
<line x1="77.40" y1="175.84" x2="80.40" y2="175.84" stroke="#d9d9d9" stroke-width="1"/>
<line x1="74.40" y1="183.78" x2="80.40" y2="183.78" stroke="#d9d9d9" stroke-width="1"/>
<line x1="77.40" y1="191.71" x2="80.40" y2="191.71" stroke="#d9d9d9" stroke-width="1"/>
<line x1="72.40" y1="199.65" x2="80.40" y2="199.65" stroke="#d9d9d9" stroke-width="1"/>
<line x1="77.40" y1="207.59" x2="80.40" y2="207.59" stroke="#d9d9d9" stroke-width="1"/>
<line x1="74.40" y1="215.53" x2="80.40" y2="215.53" stroke="#d9d9d9" stroke-width="1"/>
<line x1="77.40" y1="223.46" x2="80.40" y2="223.46" stroke="#d9d9d9" stroke-width="1"/>
<line x1="60.00" y1="231.40" x2="80.40" y2="231.40" stroke="#d9d9d9" stroke-width="1"/>
<text x="0" y="0" font-size="11" fill="#5e5e5e" transform="translate(62.8 235.40) rotate(90)">2</text>
<line x1="77.40" y1="239.34" x2="80.40" y2="239.34" stroke="#d9d9d9" stroke-width="1"/>
<line x1="74.40" y1="247.28" x2="80.40" y2="247.28" stroke="#d9d9d9" stroke-width="1"/>
<line x1="77.40" y1="255.21" x2="80.40" y2="255.21" stroke="#d9d9d9" stroke-width="1"/>
<line x1="72.40" y1="263.15" x2="80.40" y2="263.15" stroke="#d9d9d9" stroke-width="1"/>
<line x1="77.40" y1="271.09" x2="80.40" y2="271.09" stroke="#d9d9d9" stroke-width="1"/>
<line x1="74.40" y1="279.02" x2="80.40" y2="279.02" stroke="#d9d9d9" stroke-width="1"/>
<line x1="77.40" y1="286.96" x2="80.40" y2="286.96" stroke="#d9d9d9" stroke-width="1"/>
<line x1="60.00" y1="294.90" x2="80.40" y2="294.90" stroke="#d9d9d9" stroke-width="1"/>
<text x="0" y="0" font-size="11" fill="#5e5e5e" transform="translate(62.8 298.90) rotate(90)">3</text>
<line x1="77.40" y1="302.84" x2="80.40" y2="302.84" stroke="#d9d9d9" stroke-width="1"/>
<line x1="74.40" y1="310.77" x2="80.40" y2="310.77" stroke="#d9d9d9" stroke-width="1"/>
<line x1="77.40" y1="318.71" x2="80.40" y2="318.71" stroke="#d9d9d9" stroke-width="1"/>
<line x1="72.40" y1="326.65" x2="80.40" y2="326.65" stroke="#d9d9d9" stroke-width="1"/>
<line x1="77.40" y1="334.59" x2="80.40" y2="334.59" stroke="#d9d9d9" stroke-width="1"/>
<line x1="74.40" y1="342.52" x2="80.40" y2="342.52" stroke="#d9d9d9" stroke-width="1"/>
<line x1="77.40" y1="350.46" x2="80.40" y2="350.46" stroke="#d9d9d9" stroke-width="1"/>
<line x1="60.00" y1="358.40" x2="80.40" y2="358.40" stroke="#d9d9d9" stroke-width="1"/>
<text x="0" y="0" font-size="11" fill="#5e5e5e" transform="translate(62.8 362.40) rotate(90)">4</text>
<line x1="77.40" y1="366.34" x2="80.40" y2="366.34" stroke="#d9d9d9" stroke-width="1"/>
<line x1="74.40" y1="374.27" x2="80.40" y2="374.27" stroke="#d9d9d9" stroke-width="1"/>
<line x1="77.40" y1="382.21" x2="80.40" y2="382.21" stroke="#d9d9d9" stroke-width="1"/>
<line x1="72.40" y1="390.15" x2="80.40" y2="390.15" stroke="#d9d9d9" stroke-width="1"/>
<line x1="77.40" y1="398.09" x2="80.40" y2="398.09" stroke="#d9d9d9" stroke-width="1"/>
<line x1="74.40" y1="406.02" x2="80.40" y2="406.02" stroke="#d9d9d9" stroke-width="1"/>
<line x1="77.40" y1="413.96" x2="80.40" y2="413.96" stroke="#d9d9d9" stroke-width="1"/>
<line x1="60.00" y1="421.90" x2="80.40" y2="421.90" stroke="#d9d9d9" stroke-width="1"/>
<text x="0" y="0" font-size="11" fill="#5e5e5e" transform="translate(62.8 425.90) rotate(90)">5</text>
<line x1="77.40" y1="429.84" x2="80.40" y2="429.84" stroke="#d9d9d9" stroke-width="1"/>
<line x1="74.40" y1="437.77" x2="80.40" y2="437.77" stroke="#d9d9d9" stroke-width="1"/>
<line x1="77.40" y1="445.71" x2="80.40" y2="445.71" stroke="#d9d9d9" stroke-width="1"/>
<line x1="72.40" y1="453.65" x2="80.40" y2="453.65" stroke="#d9d9d9" stroke-width="1"/>
<line x1="77.40" y1="461.59" x2="80.40" y2="461.59" stroke="#d9d9d9" stroke-width="1"/>
<line x1="74.40" y1="469.52" x2="80.40" y2="469.52" stroke="#d9d9d9" stroke-width="1"/>
<line x1="77.40" y1="477.46" x2="80.40" y2="477.46" stroke="#d9d9d9" stroke-width="1"/>
<line x1="60.00" y1="485.40" x2="80.40" y2="485.40" stroke="#d9d9d9" stroke-width="1"/>
<text x="0" y="0" font-size="11" fill="#5e5e5e" transform="translate(62.8 489.40) rotate(90)">6</text>
<line x1="77.40" y1="493.34" x2="80.40" y2="493.34" stroke="#d9d9d9" stroke-width="1"/>
<line x1="74.40" y1="501.27" x2="80.40" y2="501.27" stroke="#d9d9d9" stroke-width="1"/>
<line x1="77.40" y1="509.21" x2="80.40" y2="509.21" stroke="#d9d9d9" stroke-width="1"/>
<line x1="72.40" y1="517.15" x2="80.40" y2="517.15" stroke="#d9d9d9" stroke-width="1"/>
<line x1="77.40" y1="525.09" x2="80.40" y2="525.09" stroke="#d9d9d9" stroke-width="1"/>
<line x1="74.40" y1="533.02" x2="80.40" y2="533.02" stroke="#d9d9d9" stroke-width="1"/>
<line x1="77.40" y1="540.96" x2="80.40" y2="540.96" stroke="#d9d9d9" stroke-width="1"/>
<line x1="60.00" y1="548.90" x2="80.40" y2="548.90" stroke="#d9d9d9" stroke-width="1"/>
<text x="0" y="0" font-size="11" fill="#5e5e5e" transform="translate(62.8 552.90) rotate(90)">7</text>
<line x1="77.40" y1="556.84" x2="80.40" y2="556.84" stroke="#d9d9d9" stroke-width="1"/>
<line x1="74.40" y1="564.77" x2="80.40" y2="564.77" stroke="#d9d9d9" stroke-width="1"/>
<line x1="77.40" y1="572.71" x2="80.40" y2="572.71" stroke="#d9d9d9" stroke-width="1"/>
<line x1="72.40" y1="580.65" x2="80.40" y2="580.65" stroke="#d9d9d9" stroke-width="1"/>
<line x1="77.40" y1="588.59" x2="80.40" y2="588.59" stroke="#d9d9d9" stroke-width="1"/>
<line x1="74.40" y1="596.52" x2="80.40" y2="596.52" stroke="#d9d9d9" stroke-width="1"/>
<line x1="77.40" y1="604.46" x2="80.40" y2="604.46" stroke="#d9d9d9" stroke-width="1"/>
<line x1="60.00" y1="612.40" x2="80.40" y2="612.40" stroke="#d9d9d9" stroke-width="1"/>
<text x="0" y="0" font-size="11" fill="#5e5e5e" transform="translate(62.8 616.40) rotate(90)">8</text>
<line x1="77.40" y1="620.34" x2="80.40" y2="620.34" stroke="#d9d9d9" stroke-width="1"/>
<line x1="74.40" y1="628.27" x2="80.40" y2="628.27" stroke="#d9d9d9" stroke-width="1"/>
<line x1="77.40" y1="636.21" x2="80.40" y2="636.21" stroke="#d9d9d9" stroke-width="1"/>
<line x1="72.40" y1="644.15" x2="80.40" y2="644.15" stroke="#d9d9d9" stroke-width="1"/>
<line x1="77.40" y1="652.09" x2="80.40" y2="652.09" stroke="#d9d9d9" stroke-width="1"/>
<line x1="74.40" y1="660.02" x2="80.40" y2="660.02" stroke="#d9d9d9" stroke-width="1"/>
<line x1="77.40" y1="667.96" x2="80.40" y2="667.96" stroke="#d9d9d9" stroke-width="1"/>
<line x1="60.00" y1="675.90" x2="80.40" y2="675.90" stroke="#d9d9d9" stroke-width="1"/>
<text x="0" y="0" font-size="11" fill="#5e5e5e" transform="translate(62.8 679.90) rotate(90)">9</text>
<line x1="77.40" y1="683.84" x2="80.40" y2="683.84" stroke="#d9d9d9" stroke-width="1"/>
<line x1="74.40" y1="691.77" x2="80.40" y2="691.77" stroke="#d9d9d9" stroke-width="1"/>
<line x1="77.40" y1="699.71" x2="80.40" y2="699.71" stroke="#d9d9d9" stroke-width="1"/>
<line x1="72.40" y1="707.65" x2="80.40" y2="707.65" stroke="#d9d9d9" stroke-width="1"/>
<line x1="77.40" y1="715.59" x2="80.40" y2="715.59" stroke="#d9d9d9" stroke-width="1"/>
<line x1="74.40" y1="723.52" x2="80.40" y2="723.52" stroke="#d9d9d9" stroke-width="1"/>
<line x1="77.40" y1="731.46" x2="80.40" y2="731.46" stroke="#d9d9d9" stroke-width="1"/>
<line x1="60.00" y1="739.40" x2="80.40" y2="739.40" stroke="#d9d9d9" stroke-width="1"/>
<text x="0" y="0" font-size="11" fill="#5e5e5e" transform="translate(62.8 743.40) rotate(90)">10</text>
<line x1="77.40" y1="747.34" x2="80.40" y2="747.34" stroke="#d9d9d9" stroke-width="1"/>
<line x1="74.40" y1="755.27" x2="80.40" y2="755.27" stroke="#d9d9d9" stroke-width="1"/>
<line x1="77.40" y1="763.21" x2="80.40" y2="763.21" stroke="#d9d9d9" stroke-width="1"/>
<line x1="72.40" y1="771.15" x2="80.40" y2="771.15" stroke="#d9d9d9" stroke-width="1"/>
<line x1="77.40" y1="779.09" x2="80.40" y2="779.09" stroke="#d9d9d9" stroke-width="1"/>
<line x1="74.40" y1="787.02" x2="80.40" y2="787.02" stroke="#d9d9d9" stroke-width="1"/>
<line x1="60" y1="104.40" x2="1220" y2="104.40" stroke="#dadada"/>
<line x1="80.40" y1="85" x2="80.40" y2="791" stroke="#dedede"/>
<clipPath id="cv"><rect x="80.5" y="104.2" width="1139.5" height="686.8"/></clipPath>
<g clip-path="url(#cv)">
<path d="M 149.5 571 L 149.5 511 C 149.5 503 164 498 160 496 L 168.5 425 C 164.0 422 162.0 417 165.0 413 C 162.0 409 163.0 400 166.5 396 A 151 151 0 1 1 389.5 396 C 393.0 400 394.0 409 391.0 413 C 394.0 417 392.0 422 387.5 425 L 396 496 C 392 498 406.5 503 406.5 511 L 406.5 571 Z" fill="#f8f8f8" stroke="#9a9a9a" stroke-width="1.3"/>
<circle cx="564" cy="292.5" r="140" fill="#f8f8f8"/>
<path d="M 691.5 571 L 691.5 511 C 691.5 503 706 498 702 496 L 710.5 425 C 706.0 422 704.0 417 707.0 413 C 704.0 409 705.0 400 708.5 396 A 151 151 0 1 1 931.5 396 C 935.0 400 936.0 409 933.0 413 C 936.0 417 934.0 422 929.5 425 L 938 496 C 934 498 948.5 503 948.5 511 L 948.5 571 Z M 726.75 393 A 136 136 0 1 1 913.25 393 Q 820 419 726.75 393 Z" fill="#ff0012" fill-rule="evenodd" stroke="#9a1010" stroke-width="0.8"/>
<path d="M 434.5 571 L 434.5 511 C 434.5 503 451.0 498 447.0 496 L 455.5 425 C 451.0 422 449.0 417 452.0 413 C 449.0 409 450.0 400 453.5 395.5 A 150 150 0 1 1 673.5 395.5 C 677.0 400 678.0 409 675.0 413 C 678.0 417 676.0 422 671.5 425 L 680.0 496 C 676.0 498 692.5 503 692.5 511 L 692.5 571 Z M 474.61 393 A 134.5 134.5 0 1 1 653.39 393 Q 564 419 474.61 393 Z" fill="#8a9c9f" fill-rule="evenodd" stroke="#4f5f5f" stroke-width="1"/>
<path d="M 458.50 403.50 L 463.75 406.50 L 469.00 408.38 L 474.25 410.02 L 479.50 411.49 L 484.75 412.84 L 490.00 414.07 L 495.25 415.20 L 500.50 416.23 L 505.75 417.17 L 511.00 418.02 L 516.25 418.78 L 521.50 419.46 L 526.75 420.06 L 532.00 420.58 L 537.25 421.01 L 542.50 421.37 L 547.75 421.65 L 553.00 421.84 L 558.25 421.96 L 563.50 422.00 L 568.75 421.96 L 574.00 421.84 L 579.25 421.65 L 584.50 421.37 L 589.75 421.01 L 595.00 420.58 L 600.25 420.06 L 605.50 419.46 L 610.75 418.78 L 616.00 418.02 L 621.25 417.17 L 626.50 416.23 L 631.75 415.20 L 637.00 414.07 L 642.25 412.84 L 647.50 411.49 L 652.75 410.02 L 658.00 408.38 L 663.25 406.50 L 668.50 403.50 L 668.00 406.50 L 662.77 410.08 L 657.55 412.33 L 652.33 414.29 L 647.10 416.05 L 641.88 417.65 L 636.65 419.12 L 631.42 420.47 L 626.20 421.70 L 620.98 422.83 L 615.75 423.84 L 610.52 424.76 L 605.30 425.57 L 600.08 426.29 L 594.85 426.90 L 589.62 427.42 L 584.40 427.85 L 579.17 428.18 L 573.95 428.41 L 568.73 428.55 L 563.50 428.60 L 558.27 428.55 L 553.05 428.41 L 547.83 428.18 L 542.60 427.85 L 537.38 427.42 L 532.15 426.90 L 526.92 426.29 L 521.70 425.57 L 516.48 424.76 L 511.25 423.84 L 506.02 422.83 L 500.80 421.70 L 495.57 420.47 L 490.35 419.12 L 485.12 417.65 L 479.90 416.05 L 474.68 414.29 L 469.45 412.33 L 464.23 410.08 L 459.00 406.50 Z" fill="#bac4c4" stroke="#56666a" stroke-width="1" stroke-linejoin="round"/>
<path d="M 458.00 416.60 L 463.27 419.60 L 468.55 421.48 L 473.82 423.12 L 479.10 424.59 L 484.38 425.94 L 489.65 427.17 L 494.93 428.30 L 500.20 429.33 L 505.48 430.27 L 510.75 431.12 L 516.02 431.88 L 521.30 432.56 L 526.58 433.16 L 531.85 433.68 L 537.12 434.11 L 542.40 434.47 L 547.67 434.75 L 552.95 434.94 L 558.23 435.06 L 563.50 435.10 L 568.77 435.06 L 574.05 434.94 L 579.33 434.75 L 584.60 434.47 L 589.88 434.11 L 595.15 433.68 L 600.42 433.16 L 605.70 432.56 L 610.98 431.88 L 616.25 431.12 L 621.52 430.27 L 626.80 429.33 L 632.08 428.30 L 637.35 427.17 L 642.62 425.94 L 647.90 424.59 L 653.17 423.12 L 658.45 421.48 L 663.73 419.60 L 669.00 416.60 L 668.00 418.80 L 662.77 422.09 L 657.55 424.15 L 652.33 425.95 L 647.10 427.57 L 641.88 429.05 L 636.65 430.40 L 631.42 431.63 L 626.20 432.77 L 620.98 433.80 L 615.75 434.73 L 610.52 435.57 L 605.30 436.32 L 600.08 436.97 L 594.85 437.54 L 589.62 438.02 L 584.40 438.41 L 579.17 438.71 L 573.95 438.93 L 568.73 439.06 L 563.50 439.10 L 558.27 439.06 L 553.05 438.93 L 547.83 438.71 L 542.60 438.41 L 537.38 438.02 L 532.15 437.54 L 526.92 436.97 L 521.70 436.32 L 516.48 435.57 L 511.25 434.73 L 506.02 433.80 L 500.80 432.77 L 495.57 431.63 L 490.35 430.40 L 485.12 429.05 L 479.90 427.57 L 474.68 425.95 L 469.45 424.15 L 464.23 422.09 L 459.00 418.80 Z" fill="#bac4c4" stroke="#56666a" stroke-width="1" stroke-linejoin="round"/>
<path d="M 443.00 508.40 L 449.02 516.36 L 455.05 520.02 L 461.07 522.91 L 467.10 525.35 L 473.12 527.48 L 479.15 529.36 L 485.18 531.04 L 491.20 532.54 L 497.23 533.88 L 503.25 535.08 L 509.27 536.15 L 515.30 537.08 L 521.33 537.90 L 527.35 538.60 L 533.38 539.18 L 539.40 539.66 L 545.42 540.03 L 551.45 540.29 L 557.48 540.45 L 563.50 540.50 L 569.52 540.45 L 575.55 540.29 L 581.58 540.03 L 587.60 539.66 L 593.62 539.18 L 599.65 538.60 L 605.67 537.90 L 611.70 537.08 L 617.73 536.15 L 623.75 535.08 L 629.77 533.88 L 635.80 532.54 L 641.83 531.04 L 647.85 529.36 L 653.88 527.48 L 659.90 525.35 L 665.92 522.91 L 671.95 520.02 L 677.98 516.36 L 684.00 508.40 L 684.50 513.50 L 678.45 522.40 L 672.40 526.50 L 666.35 529.73 L 660.30 532.46 L 654.25 534.83 L 648.20 536.94 L 642.15 538.82 L 636.10 540.50 L 630.05 542.00 L 624.00 543.34 L 617.95 544.53 L 611.90 545.58 L 605.85 546.49 L 599.80 547.27 L 593.75 547.93 L 587.70 548.46 L 581.65 548.87 L 575.60 549.17 L 569.55 549.34 L 563.50 549.40 L 557.45 549.34 L 551.40 549.17 L 545.35 548.87 L 539.30 548.46 L 533.25 547.93 L 527.20 547.27 L 521.15 546.49 L 515.10 545.58 L 509.05 544.53 L 503.00 543.34 L 496.95 542.00 L 490.90 540.50 L 484.85 538.82 L 478.80 536.94 L 472.75 534.83 L 466.70 532.46 L 460.65 529.73 L 454.60 526.50 L 448.55 522.40 L 442.50 513.50 Z" fill="#bac4c4" stroke="#56666a" stroke-width="1" stroke-linejoin="round"/>
<path d="M 442.50 529.20 L 448.55 536.29 L 454.60 539.56 L 460.65 542.13 L 466.70 544.30 L 472.75 546.20 L 478.80 547.87 L 484.85 549.37 L 490.90 550.71 L 496.95 551.90 L 503.00 552.97 L 509.05 553.92 L 515.10 554.76 L 521.15 555.48 L 527.20 556.11 L 533.25 556.63 L 539.30 557.05 L 545.35 557.38 L 551.40 557.61 L 557.45 557.75 L 563.50 557.80 L 569.55 557.75 L 575.60 557.61 L 581.65 557.38 L 587.70 557.05 L 593.75 556.63 L 599.80 556.11 L 605.85 555.48 L 611.90 554.76 L 617.95 553.92 L 624.00 552.97 L 630.05 551.90 L 636.10 550.71 L 642.15 549.37 L 648.20 547.87 L 654.25 546.20 L 660.30 544.30 L 666.35 542.13 L 672.40 539.56 L 678.45 536.29 L 684.50 529.20 L 683.00 533.70 L 677.02 541.75 L 671.05 545.47 L 665.08 548.39 L 659.10 550.86 L 653.12 553.01 L 647.15 554.92 L 641.17 556.62 L 635.20 558.14 L 629.23 559.50 L 623.25 560.71 L 617.27 561.79 L 611.30 562.74 L 605.33 563.57 L 599.35 564.27 L 593.38 564.87 L 587.40 565.35 L 581.42 565.72 L 575.45 565.99 L 569.48 566.15 L 563.50 566.20 L 557.52 566.15 L 551.55 565.99 L 545.58 565.72 L 539.60 565.35 L 533.62 564.87 L 527.65 564.27 L 521.67 563.57 L 515.70 562.74 L 509.73 561.79 L 503.75 560.71 L 497.77 559.50 L 491.80 558.14 L 485.82 556.62 L 479.85 554.92 L 473.88 553.01 L 467.90 550.86 L 461.93 548.39 L 455.95 545.47 L 449.98 541.75 L 444.00 533.70 Z" fill="#bac4c4" stroke="#56666a" stroke-width="1" stroke-linejoin="round"/>
<path d="M 460.30 428.00 L 465.46 429.31 L 470.62 430.59 L 475.78 431.83 L 480.94 433.03 L 486.10 434.20 L 491.26 435.33 L 496.42 436.42 L 501.58 437.47 L 506.74 438.48 L 511.90 439.44 L 517.06 440.36 L 522.22 441.22 L 527.38 442.03 L 532.54 442.79 L 537.70 443.49 L 542.86 444.12 L 548.02 444.67 L 553.18 445.14 L 558.34 445.50 L 563.50 445.70 L 568.66 445.50 L 573.82 445.14 L 578.98 444.67 L 584.14 444.12 L 589.30 443.49 L 594.46 442.79 L 599.62 442.03 L 604.78 441.22 L 609.94 440.36 L 615.10 439.44 L 620.26 438.48 L 625.42 437.47 L 630.58 436.42 L 635.74 435.33 L 640.90 434.20 L 646.06 433.03 L 651.22 431.83 L 656.38 430.59 L 661.54 429.31 L 666.70 428.00 L 676.10 505.90 L 670.47 512.74 L 664.84 515.89 L 659.21 518.38 L 653.58 520.47 L 647.95 522.30 L 642.32 523.92 L 636.69 525.36 L 631.06 526.66 L 625.43 527.81 L 619.80 528.84 L 614.17 529.76 L 608.54 530.56 L 602.91 531.26 L 597.28 531.86 L 591.65 532.37 L 586.02 532.78 L 580.39 533.10 L 574.76 533.32 L 569.13 533.46 L 563.50 533.50 L 557.87 533.46 L 552.24 533.32 L 546.61 533.10 L 540.98 532.78 L 535.35 532.37 L 529.72 531.86 L 524.09 531.26 L 518.46 530.56 L 512.83 529.76 L 507.20 528.84 L 501.57 527.81 L 495.94 526.66 L 490.31 525.36 L 484.68 523.92 L 479.05 522.30 L 473.42 520.47 L 467.79 518.38 L 462.16 515.89 L 456.53 512.74 L 450.90 505.90 Z" fill="#bdc6c6" stroke="#56666a" stroke-width="1.1"/>
<clipPath id="pc"><path d="M 460.30 428.00 L 465.46 429.31 L 470.62 430.59 L 475.78 431.83 L 480.94 433.03 L 486.10 434.20 L 491.26 435.33 L 496.42 436.42 L 501.58 437.47 L 506.74 438.48 L 511.90 439.44 L 517.06 440.36 L 522.22 441.22 L 527.38 442.03 L 532.54 442.79 L 537.70 443.49 L 542.86 444.12 L 548.02 444.67 L 553.18 445.14 L 558.34 445.50 L 563.50 445.70 L 568.66 445.50 L 573.82 445.14 L 578.98 444.67 L 584.14 444.12 L 589.30 443.49 L 594.46 442.79 L 599.62 442.03 L 604.78 441.22 L 609.94 440.36 L 615.10 439.44 L 620.26 438.48 L 625.42 437.47 L 630.58 436.42 L 635.74 435.33 L 640.90 434.20 L 646.06 433.03 L 651.22 431.83 L 656.38 430.59 L 661.54 429.31 L 666.70 428.00 L 676.10 505.90 L 670.47 512.74 L 664.84 515.89 L 659.21 518.38 L 653.58 520.47 L 647.95 522.30 L 642.32 523.92 L 636.69 525.36 L 631.06 526.66 L 625.43 527.81 L 619.80 528.84 L 614.17 529.76 L 608.54 530.56 L 602.91 531.26 L 597.28 531.86 L 591.65 532.37 L 586.02 532.78 L 580.39 533.10 L 574.76 533.32 L 569.13 533.46 L 563.50 533.50 L 557.87 533.46 L 552.24 533.32 L 546.61 533.10 L 540.98 532.78 L 535.35 532.37 L 529.72 531.86 L 524.09 531.26 L 518.46 530.56 L 512.83 529.76 L 507.20 528.84 L 501.57 527.81 L 495.94 526.66 L 490.31 525.36 L 484.68 523.92 L 479.05 522.30 L 473.42 520.47 L 467.79 518.38 L 462.16 515.89 L 456.53 512.74 L 450.90 505.90 Z"/></clipPath>
<g clip-path="url(#pc)"><path d="M 480.00 477.00 L 487.28 442.76 M 483.27 461.59 L 480.03 456.60 M 483.27 461.59 L 488.26 458.35 M 485.09 453.04 L 482.23 448.63 M 485.09 453.04 L 489.50 450.18 M 486.40 446.87 L 485.07 444.82 M 486.40 446.87 L 488.46 445.54 M 480.00 477.00 L 513.29 466.18 M 494.98 472.13 L 497.68 466.83 M 494.98 472.13 L 500.28 474.83 M 503.30 469.43 L 505.68 464.75 M 503.30 469.43 L 507.98 471.81 M 509.29 467.48 L 510.40 465.30 M 509.29 467.48 L 511.48 468.59 M 480.00 477.00 L 506.01 500.42 M 491.70 487.54 L 497.65 487.23 M 491.70 487.54 L 492.02 493.48 M 498.21 493.39 L 503.45 493.12 M 498.21 493.39 L 498.48 498.64 M 502.89 497.61 L 505.34 497.48 M 502.89 497.61 L 503.02 500.06 M 480.00 477.00 L 472.72 511.24 M 476.73 492.41 L 479.97 497.40 M 476.73 492.41 L 471.74 495.65 M 474.91 500.96 L 477.77 505.37 M 474.91 500.96 L 470.50 503.82 M 473.60 507.13 L 474.93 509.18 M 473.60 507.13 L 471.54 508.46 M 480.00 477.00 L 446.71 487.82 M 465.02 481.87 L 462.32 487.17 M 465.02 481.87 L 459.72 479.17 M 456.70 484.57 L 454.32 489.25 M 456.70 484.57 L 452.02 482.19 M 450.71 486.52 L 449.60 488.70 M 450.71 486.52 L 448.52 485.41 M 480.00 477.00 L 453.99 453.58 M 468.30 466.46 L 462.35 466.77 M 468.30 466.46 L 467.98 460.52 M 461.79 460.61 L 456.55 460.88 M 461.79 460.61 L 461.52 455.36 M 457.11 456.39 L 454.66 456.52 M 457.11 456.39 L 456.98 453.94" stroke="#7a8789" stroke-width="4.8" stroke-linecap="round" fill="none"/><path d="M 480.00 477.00 L 487.28 442.76 M 483.27 461.59 L 480.03 456.60 M 483.27 461.59 L 488.26 458.35 M 485.09 453.04 L 482.23 448.63 M 485.09 453.04 L 489.50 450.18 M 486.40 446.87 L 485.07 444.82 M 486.40 446.87 L 488.46 445.54 M 480.00 477.00 L 513.29 466.18 M 494.98 472.13 L 497.68 466.83 M 494.98 472.13 L 500.28 474.83 M 503.30 469.43 L 505.68 464.75 M 503.30 469.43 L 507.98 471.81 M 509.29 467.48 L 510.40 465.30 M 509.29 467.48 L 511.48 468.59 M 480.00 477.00 L 506.01 500.42 M 491.70 487.54 L 497.65 487.23 M 491.70 487.54 L 492.02 493.48 M 498.21 493.39 L 503.45 493.12 M 498.21 493.39 L 498.48 498.64 M 502.89 497.61 L 505.34 497.48 M 502.89 497.61 L 503.02 500.06 M 480.00 477.00 L 472.72 511.24 M 476.73 492.41 L 479.97 497.40 M 476.73 492.41 L 471.74 495.65 M 474.91 500.96 L 477.77 505.37 M 474.91 500.96 L 470.50 503.82 M 473.60 507.13 L 474.93 509.18 M 473.60 507.13 L 471.54 508.46 M 480.00 477.00 L 446.71 487.82 M 465.02 481.87 L 462.32 487.17 M 465.02 481.87 L 459.72 479.17 M 456.70 484.57 L 454.32 489.25 M 456.70 484.57 L 452.02 482.19 M 450.71 486.52 L 449.60 488.70 M 450.71 486.52 L 448.52 485.41 M 480.00 477.00 L 453.99 453.58 M 468.30 466.46 L 462.35 466.77 M 468.30 466.46 L 467.98 460.52 M 461.79 460.61 L 456.55 460.88 M 461.79 460.61 L 461.52 455.36 M 457.11 456.39 L 454.66 456.52 M 457.11 456.39 L 456.98 453.94" stroke="#f7f7f7" stroke-width="3.0" stroke-linecap="round" fill="none"/><path d="M 564.00 488.50 L 564.00 450.50 M 564.00 471.40 L 559.43 466.83 M 564.00 471.40 L 568.57 466.83 M 564.00 461.90 L 559.97 457.87 M 564.00 461.90 L 568.03 457.87 M 564.00 455.06 L 562.12 453.18 M 564.00 455.06 L 565.88 453.18 M 564.00 488.50 L 596.91 469.50 M 578.81 479.95 L 580.48 473.71 M 578.81 479.95 L 585.05 481.62 M 587.04 475.20 L 588.51 469.69 M 587.04 475.20 L 592.54 476.68 M 592.96 471.78 L 593.65 469.21 M 592.96 471.78 L 595.53 472.47 M 564.00 488.50 L 596.91 507.50 M 578.81 497.05 L 585.05 495.38 M 578.81 497.05 L 580.48 503.29 M 587.04 501.80 L 592.54 500.32 M 587.04 501.80 L 588.51 507.31 M 592.96 505.22 L 595.53 504.53 M 592.96 505.22 L 593.65 507.79 M 564.00 488.50 L 564.00 526.50 M 564.00 505.60 L 568.57 510.17 M 564.00 505.60 L 559.43 510.17 M 564.00 515.10 L 568.03 519.13 M 564.00 515.10 L 559.97 519.13 M 564.00 521.94 L 565.88 523.82 M 564.00 521.94 L 562.12 523.82 M 564.00 488.50 L 531.09 507.50 M 549.19 497.05 L 547.52 503.29 M 549.19 497.05 L 542.95 495.38 M 540.96 501.80 L 539.49 507.31 M 540.96 501.80 L 535.46 500.32 M 535.04 505.22 L 534.35 507.79 M 535.04 505.22 L 532.47 504.53 M 564.00 488.50 L 531.09 469.50 M 549.19 479.95 L 542.95 481.62 M 549.19 479.95 L 547.52 473.71 M 540.96 475.20 L 535.46 476.68 M 540.96 475.20 L 539.49 469.69 M 535.04 471.78 L 532.47 472.47 M 535.04 471.78 L 534.35 469.21" stroke="#7a8789" stroke-width="4.8" stroke-linecap="round" fill="none"/><path d="M 564.00 488.50 L 564.00 450.50 M 564.00 471.40 L 559.43 466.83 M 564.00 471.40 L 568.57 466.83 M 564.00 461.90 L 559.97 457.87 M 564.00 461.90 L 568.03 457.87 M 564.00 455.06 L 562.12 453.18 M 564.00 455.06 L 565.88 453.18 M 564.00 488.50 L 596.91 469.50 M 578.81 479.95 L 580.48 473.71 M 578.81 479.95 L 585.05 481.62 M 587.04 475.20 L 588.51 469.69 M 587.04 475.20 L 592.54 476.68 M 592.96 471.78 L 593.65 469.21 M 592.96 471.78 L 595.53 472.47 M 564.00 488.50 L 596.91 507.50 M 578.81 497.05 L 585.05 495.38 M 578.81 497.05 L 580.48 503.29 M 587.04 501.80 L 592.54 500.32 M 587.04 501.80 L 588.51 507.31 M 592.96 505.22 L 595.53 504.53 M 592.96 505.22 L 593.65 507.79 M 564.00 488.50 L 564.00 526.50 M 564.00 505.60 L 568.57 510.17 M 564.00 505.60 L 559.43 510.17 M 564.00 515.10 L 568.03 519.13 M 564.00 515.10 L 559.97 519.13 M 564.00 521.94 L 565.88 523.82 M 564.00 521.94 L 562.12 523.82 M 564.00 488.50 L 531.09 507.50 M 549.19 497.05 L 547.52 503.29 M 549.19 497.05 L 542.95 495.38 M 540.96 501.80 L 539.49 507.31 M 540.96 501.80 L 535.46 500.32 M 535.04 505.22 L 534.35 507.79 M 535.04 505.22 L 532.47 504.53 M 564.00 488.50 L 531.09 469.50 M 549.19 479.95 L 542.95 481.62 M 549.19 479.95 L 547.52 473.71 M 540.96 475.20 L 535.46 476.68 M 540.96 475.20 L 539.49 469.69 M 535.04 471.78 L 532.47 472.47 M 535.04 471.78 L 534.35 469.21" stroke="#f7f7f7" stroke-width="3.0" stroke-linecap="round" fill="none"/><path d="M 648.50 477.00 L 639.70 444.16 M 644.54 462.22 L 639.53 459.33 M 644.54 462.22 L 647.43 457.22 M 642.34 454.01 L 637.92 451.46 M 642.34 454.01 L 644.89 449.59 M 640.76 448.10 L 638.69 446.91 M 640.76 448.10 L 641.95 446.04 M 648.50 477.00 L 672.54 452.96 M 659.32 466.18 L 659.32 460.40 M 659.32 466.18 L 665.10 466.18 M 665.33 460.17 L 665.33 455.07 M 665.33 460.17 L 670.43 460.17 M 669.66 455.84 L 669.66 453.46 M 669.66 455.84 L 672.04 455.84 M 648.50 477.00 L 681.34 485.80 M 663.28 480.96 L 668.28 478.07 M 663.28 480.96 L 666.17 485.97 M 671.49 483.16 L 675.91 480.61 M 671.49 483.16 L 674.04 487.58 M 677.40 484.74 L 679.46 483.55 M 677.40 484.74 L 678.59 486.81 M 648.50 477.00 L 657.30 509.84 M 652.46 491.78 L 657.47 494.67 M 652.46 491.78 L 649.57 496.78 M 654.66 499.99 L 659.08 502.54 M 654.66 499.99 L 652.11 504.41 M 656.24 505.90 L 658.31 507.09 M 656.24 505.90 L 655.05 507.96 M 648.50 477.00 L 624.46 501.04 M 637.68 487.82 L 637.68 493.60 M 637.68 487.82 L 631.90 487.82 M 631.67 493.83 L 631.67 498.93 M 631.67 493.83 L 626.57 493.83 M 627.34 498.16 L 627.34 500.54 M 627.34 498.16 L 624.96 498.16 M 648.50 477.00 L 615.66 468.20 M 633.72 473.04 L 628.72 475.93 M 633.72 473.04 L 630.83 468.03 M 625.51 470.84 L 621.09 473.39 M 625.51 470.84 L 622.96 466.42 M 619.60 469.26 L 617.54 470.45 M 619.60 469.26 L 618.41 467.19" stroke="#7a8789" stroke-width="4.8" stroke-linecap="round" fill="none"/><path d="M 648.50 477.00 L 639.70 444.16 M 644.54 462.22 L 639.53 459.33 M 644.54 462.22 L 647.43 457.22 M 642.34 454.01 L 637.92 451.46 M 642.34 454.01 L 644.89 449.59 M 640.76 448.10 L 638.69 446.91 M 640.76 448.10 L 641.95 446.04 M 648.50 477.00 L 672.54 452.96 M 659.32 466.18 L 659.32 460.40 M 659.32 466.18 L 665.10 466.18 M 665.33 460.17 L 665.33 455.07 M 665.33 460.17 L 670.43 460.17 M 669.66 455.84 L 669.66 453.46 M 669.66 455.84 L 672.04 455.84 M 648.50 477.00 L 681.34 485.80 M 663.28 480.96 L 668.28 478.07 M 663.28 480.96 L 666.17 485.97 M 671.49 483.16 L 675.91 480.61 M 671.49 483.16 L 674.04 487.58 M 677.40 484.74 L 679.46 483.55 M 677.40 484.74 L 678.59 486.81 M 648.50 477.00 L 657.30 509.84 M 652.46 491.78 L 657.47 494.67 M 652.46 491.78 L 649.57 496.78 M 654.66 499.99 L 659.08 502.54 M 654.66 499.99 L 652.11 504.41 M 656.24 505.90 L 658.31 507.09 M 656.24 505.90 L 655.05 507.96 M 648.50 477.00 L 624.46 501.04 M 637.68 487.82 L 637.68 493.60 M 637.68 487.82 L 631.90 487.82 M 631.67 493.83 L 631.67 498.93 M 631.67 493.83 L 626.57 493.83 M 627.34 498.16 L 627.34 500.54 M 627.34 498.16 L 624.96 498.16 M 648.50 477.00 L 615.66 468.20 M 633.72 473.04 L 628.72 475.93 M 633.72 473.04 L 630.83 468.03 M 625.51 470.84 L 621.09 473.39 M 625.51 470.84 L 622.96 466.42 M 619.60 469.26 L 617.54 470.45 M 619.60 469.26 L 618.41 467.19" stroke="#f7f7f7" stroke-width="3.0" stroke-linecap="round" fill="none"/><path d="M 517 498.7 L 509.6 510.5 L 512.0 510.5 L 505.9 520.5 L 508.5 520.5 L 503.5 531 L 525.0 531 L 523.0 521 L 524.6 521 L 521.4 511.5 L 523.0 511.5 Z" fill="#f7f7f7" stroke="#5f6f6f" stroke-width="0.8" stroke-linejoin="round"/><path d="M 612.3 498.7 L 606.8 510.5 L 608.6 510.5 L 604.1 520.5 L 606.0 520.5 L 602.3 531 L 622.3 531 L 619.8 521 L 621.8 521 L 617.8 511.5 L 619.8 511.5 Z" fill="#f7f7f7" stroke="#5f6f6f" stroke-width="0.8" stroke-linejoin="round"/><circle cx="468.4" cy="440.8" r="3.2" fill="#f7f7f7" stroke="#5f6f6f" stroke-width="0.8"/><circle cx="524.2" cy="453.2" r="4" fill="#f7f7f7" stroke="#5f6f6f" stroke-width="0.8"/><circle cx="585" cy="456.4" r="3.5" fill="#f7f7f7" stroke="#5f6f6f" stroke-width="0.8"/><circle cx="611" cy="453.2" r="4" fill="#f7f7f7" stroke="#5f6f6f" stroke-width="0.8"/><circle cx="658.7" cy="442" r="3.5" fill="#f7f7f7" stroke="#5f6f6f" stroke-width="0.8"/><circle cx="516.8" cy="481.7" r="3.5" fill="#f7f7f7" stroke="#5f6f6f" stroke-width="0.8"/><circle cx="606" cy="482.2" r="3.5" fill="#f7f7f7" stroke="#5f6f6f" stroke-width="0.8"/><circle cx="489.5" cy="514" r="4" fill="#f7f7f7" stroke="#5f6f6f" stroke-width="0.8"/><circle cx="544" cy="524" r="3.5" fill="#f7f7f7" stroke="#5f6f6f" stroke-width="0.8"/><circle cx="583.3" cy="520.2" r="3.5" fill="#f7f7f7" stroke="#5f6f6f" stroke-width="0.8"/><circle cx="638.4" cy="515.2" r="4" fill="#f7f7f7" stroke="#5f6f6f" stroke-width="0.8"/></g>
<path d="M 928.40 385 A 150 150 0 1 1 1136.60 385 Q 1032.5 428.0 928.40 385 Z" fill="#023f9f" stroke="#10306a" stroke-width="0.8"/>
<path d="M 942.92 659 A 135.2 135.2 0 1 1 1127.08 659 Q 1035 688.0 942.92 659 Z" fill="#2bff4f" stroke="#2f7a3f" stroke-width="0.8"/>
<path d="M836.3 142.8 L837.3 167.5 L841.5 162.8 L845 170.3 L848.8 168.7 L845.3 161.8 L852.5 161.8 Z" fill="#050505" stroke="#fff" stroke-width="1.5" stroke-linejoin="round"/>
</g>
<rect x="60" y="40" width="1176" height="45" fill="#fff"/>
<rect x="60" y="84" width="1176" height="1" fill="#d6d6d6"/>
<path d="M77 62 L81 58.5 M77 62 L81 65.5 M77 62 H87 A4 4 0 0 1 87 70 H82" fill="none" stroke="#2f343b" stroke-width="1.5" stroke-linecap="round" stroke-linejoin="round"/>
<path d="M124 62 L120 58.5 M124 62 L120 65.5 M124 62 H114 A4 4 0 0 0 114 70 H119" fill="none" stroke="#2f343b" stroke-width="1.5" stroke-linecap="round" stroke-linejoin="round"/>
<rect x="140.0" y="48" width="1" height="29" fill="#e0e0e0"/>
<rect x="262.0" y="48" width="1" height="29" fill="#e0e0e0"/>
<rect x="364.0" y="48" width="1" height="29" fill="#e0e0e0"/>
<rect x="497.5" y="48" width="1" height="29" fill="#e0e0e0"/>
<rect x="548.5" y="48" width="1" height="29" fill="#e0e0e0"/>
<rect x="603.0" y="48" width="1" height="29" fill="#e0e0e0"/>
<rect x="767.0" y="48" width="1" height="29" fill="#e0e0e0"/>
<rect x="865.5" y="48" width="1" height="29" fill="#e0e0e0"/>
<rect x="155" y="61" width="73.5" height="15" rx="2" fill="#fff" stroke="#ececec"/>
<path d="M218.5 66.5 L223.5 66.5 L221 71 Z" fill="#d6d6d6"/>
<text x="160" y="72" font-size="10" fill="#d4d4d4">Basic Cut</text>
<rect x="233.5" y="61" width="15" height="15" rx="2" fill="#fff" stroke="#efefef"/>
<path d="M235 75 L247 62" stroke="#eaa79a" stroke-width="1.6"/>
<rect x="288.3" y="62.5" width="14.3" height="14.3" rx="4" fill="none" stroke="#2f343b" stroke-width="1.5" stroke-dasharray="3 2.2"/>
<circle cx="292.6" cy="66.8" r="1.7" fill="#2f343b" fill-opacity="0.85"/>
<circle cx="298.1" cy="67" r="1.7" fill="#2f343b" fill-opacity="0.85"/>
<circle cx="292.6" cy="72.1" r="1.7" fill="#2f343b" fill-opacity="0.85"/>
<path d="M296.6 70.3 L301.3 72.4 L299.2 73.1 L298.4 75.2 Z" fill="#2f343b"/>
<path d="M330 76 L331.3 71.5 L339.5 63.3 A1.6 1.6 0 0 1 341.8 63.3 L342.3 63.8 A1.6 1.6 0 0 1 342.3 66.1 L334 74.5 Z M338 64.8 L340.8 67.6" fill="none" stroke="#2f343b" stroke-width="1.4" stroke-linejoin="round"/>
<path d="M347 68 L352 68 L349.5 72.5 Z" fill="#2f343b"/>
<path d="M381.5 63 V76" stroke="#c9c9c9" stroke-width="1.3"/><rect x="384" y="66.5" width="11" height="6" rx="1" fill="none" stroke="#c9c9c9" stroke-width="1.3"/>
<path d="M398 68 L403 68 L400.5 72 Z" fill="#c9c9c9"/>
<rect x="418.5" y="63.5" width="8" height="8" fill="none" stroke="#c9c9c9" stroke-width="1.2"/><rect x="422" y="67" width="8" height="8" fill="#fff" stroke="#c9c9c9" stroke-width="1.2"/>
<path d="M434.5 68 L439.5 68 L437 72 Z" fill="#c9c9c9"/>
<path d="M468.5 63 L462.5 75.5 H468.5 Z M470.5 63 L476.5 75.5 H470.5 Z" fill="none" stroke="#c9c9c9" stroke-width="1.2" stroke-linejoin="round"/>
<path d="M480 68 L485 68 L482.5 72 Z" fill="#c9c9c9"/>
<path d="M520.5 62.5 L528 68 L525.3 76 L515.7 76 L513 68 Z" fill="none" stroke="#c9c9c9" stroke-width="1.2" stroke-dasharray="2 1.5"/><path d="M520.5 66 L524 68.6 L522.7 72.5 L518.3 72.5 L517 68.6 Z" fill="none" stroke="#c9c9c9" stroke-width="1.2"/>
<path d="M532 68 L537 68 L534.5 72 Z" fill="#c9c9c9"/>
<path d="M565 66 Q573.5 68 582 66 V75 Q573.5 73 565 75 Z M569.5 67 V74 M577.5 67 V74" fill="none" stroke="#c9c9c9" stroke-width="1.2"/>
<path d="M586 69 L591 69 L588.5 73 Z" fill="#c9c9c9"/>
<rect x="630.7" y="61" width="48.59999999999991" height="15.5" rx="2" fill="#fff" stroke="#efefef"/><path d="M668.8 61 V76.5" stroke="#f2f2f2"/><path d="M671.3 67.25 L676.3 67.25 L673.8 63.75 Z M671.3 70.25 L676.3 70.25 L673.8 73.75 Z" fill="#d2d2d2"/><text x="634.7" y="72.25" font-size="10" fill="#e6e6e6">0</text>
<rect x="704.7" y="61" width="50.0" height="15.5" rx="2" fill="#fff" stroke="#efefef"/><path d="M744.2 61 V76.5" stroke="#f2f2f2"/><path d="M746.7 67.25 L751.7 67.25 L749.2 63.75 Z M746.7 70.25 L751.7 70.25 L749.2 73.75 Z" fill="#d2d2d2"/><text x="708.7" y="72.25" font-size="10" fill="#e6e6e6">0</text>
<rect x="803.3" y="61" width="50.0" height="15.5" rx="2" fill="#fff" stroke="#efefef"/><path d="M842.8 61 V76.5" stroke="#f2f2f2"/><path d="M845.3 67.25 L850.3 67.25 L847.8 63.75 Z M845.3 70.25 L850.3 70.25 L847.8 73.75 Z" fill="#d2d2d2"/><text x="807.3" y="72.25" font-size="10" fill="#e6e6e6">0</text>
<rect x="890" y="61" width="50" height="15.5" rx="2" fill="#fff" stroke="#efefef"/><path d="M929.5 61 V76.5" stroke="#f2f2f2"/><path d="M932.0 67.25 L937.0 67.25 L934.5 63.75 Z M932.0 70.25 L937.0 70.25 L934.5 73.75 Z" fill="#d2d2d2"/><text x="894" y="72.25" font-size="10" fill="#e6e6e6">0</text>
<rect x="959" y="61" width="49" height="15.5" rx="2" fill="#fff" stroke="#efefef"/><path d="M997.5 61 V76.5" stroke="#f2f2f2"/><path d="M1000.0 67.25 L1005.0 67.25 L1002.5 63.75 Z M1000.0 70.25 L1005.0 70.25 L1002.5 73.75 Z" fill="#d2d2d2"/><text x="963" y="72.25" font-size="10" fill="#e6e6e6">0</text>
<rect x="690.5" y="54" width="9" height="6.5" rx="1" fill="none" stroke="#c9c9c9" stroke-width="1.2"/><path d="M692.5 54 V52 A2.5 2.5 0 0 1 697.5 52 V54" fill="none" stroke="#c9c9c9" stroke-width="1.2"/><circle cx="695" cy="57.3" r="0.8" fill="#c9c9c9"/>
<path d="M682 58 H690 M700 58 H708" stroke="#efefef" stroke-width="1"/>
<path d="M785 67.5 A6 6 0 0 1 795.5 66 M795.5 71.5 A6 6 0 0 1 785 73" fill="none" stroke="#c9c9c9" stroke-width="1.4"/><path d="M795.8 62.5 V67 H791.5 M784.5 77 V72.5 H788.8" fill="none" stroke="#c9c9c9" stroke-width="1.3"/>
<text x="154.7" y="56" font-size="9.6" fill="#cccccc">Operation</text>
<text x="276" y="56" font-size="9.6" fill="#6f6f6f">Select All</text>
<text x="331.3" y="56" font-size="9.6" fill="#6f6f6f">Edit</text>
<text x="380" y="56" font-size="9.6" fill="#c9c9c9">Align</text>
<text x="415.3" y="56" font-size="9.6" fill="#c9c9c9">Arrange</text>
<text x="465.3" y="56" font-size="9.6" fill="#c9c9c9">Flip</text>
<text x="512" y="56" font-size="9.6" fill="#c9c9c9">Offset</text>
<text x="566" y="56" font-size="9.6" fill="#c9c9c9">Warp</text>
<text x="617.3" y="56" font-size="9.6" fill="#c9c9c9">Size</text>
<text x="780.8" y="56" font-size="9.6" fill="#c9c9c9">Rotate</text>
<text x="880" y="56" font-size="9.6" fill="#c9c9c9">Position</text>
<text x="617.5" y="72.5" font-size="10.5" fill="#d0d0d0">W</text>
<text x="694" y="72.5" font-size="10.5" fill="#d0d0d0">H</text>
<text x="880" y="72.5" font-size="10.5" fill="#d0d0d0">X</text>
<text x="949" y="72.5" font-size="10.5" fill="#d0d0d0">Y</text>
<rect x="1236" y="40" width="264" height="766" fill="#fff"/>
<rect x="1236" y="40" width="1.3" height="766" fill="#e3e3e3"/>
<text x="1252.5" y="66" font-size="13" font-weight="bold" fill="#1c7c56" textLength="37.5" lengthAdjust="spacingAndGlyphs">Layers</text>
<text x="1318" y="66" font-size="13" fill="#5a5a5a">Color Sync</text>
<rect x="1238" y="80" width="66" height="2.6" fill="#1c7c56"/>
<rect x="1237" y="83" width="263" height="1" fill="#ececec"/>
<path d="M1255 100 V97 H1258 M1266 97 H1269 V100 M1269 108 V111 H1266 M1258 111 H1255 V108" fill="none" stroke="#dedede" stroke-width="1.2"/><rect x="1258.5" y="100.5" width="6" height="6" rx="1" fill="none" stroke="#dedede" stroke-width="1.1"/><rect x="1260.5" y="102.5" width="6" height="6" rx="1" fill="none" stroke="#dedede" stroke-width="1.1"/>
<path d="M1291 108 V97 H1302" fill="none" stroke="#dedede" stroke-width="1.2"/><rect x="1294" y="100" width="11" height="11" fill="none" stroke="#dedede" stroke-width="1.2"/><path d="M1299.5 102.5 V108.5 M1296.5 105.5 H1302.5" stroke="#dedede" stroke-width="1.2"/>
<path d="M1325 99 H1341 M1330 99 V97 H1336 V99 M1327 99 L1328 111 H1338 L1339 99 M1331 102 V108 M1335 102 V108" fill="none" stroke="#dedede" stroke-width="1.2"/>
<rect x="1237" y="125.5" width="263" height="1" fill="#e6e6e6"/>
<rect x="1487" y="126.5" width="13" height="591.5" fill="#f0f0f0"/>
<path d="M1490.5 137 L1496.5 137 L1493.5 133.5 Z" fill="#b5b5b5"/>
<path d="M1490.5 709 L1496.5 709 L1493.5 712.5 Z" fill="#8a8a8a"/>
<path d="M1251 150.5 L1255.5 155 L1260 150.5" fill="none" stroke="#333" stroke-width="1.4"/>
<rect x="1270.5" y="148.5" width="5" height="7" rx="2" fill="#fff" stroke="#777" stroke-width="0.8"/><rect x="1274.5" y="148" width="5" height="6" rx="2" fill="#fff" stroke="#222" stroke-width="1"/><rect x="1275" y="154" width="4.5" height="2.5" fill="#222"/><rect x="1279.5" y="150" width="4" height="6" fill="#e01010"/><circle cx="1286" cy="149.5" r="2.8" fill="#0a3fa0"/><circle cx="1287" cy="155.5" r="2.8" fill="#2bd84a"/>
<text x="1298" y="158" font-size="13" fill="#555">Svg-snowglobe-card-cr...</text>
<circle cx="1308.3" cy="199.1" r="6.6" fill="#fff" stroke="#1a1a1a" stroke-width="1.4"/><path d="M1302.5 205.5 Q1308.3 207.5 1314 205.5 V210.5 H1302.5 Z" fill="#fff" stroke="#1a1a1a" stroke-width="1.1"/><rect x="1302" y="210" width="12.5" height="2.3" fill="#111"/>
<text x="1326" y="199" font-size="13" fill="#555">Svg-snowglobe-car...</text>
<text x="1326" y="216" font-size="13" fill="#8f8f8f">Basic Cut</text>
<circle cx="1308.3" cy="249.6" r="6.6" fill="#fff" stroke="#333" stroke-width="1.3"/><path d="M1302.5 255 Q1308.3 257 1314 255 V262 H1302.5 Z" fill="#8a9494" stroke="#444" stroke-width="0.6"/><path d="M1303.5 257.5 L1306 259.5 L1308.3 257.5 L1310.5 259.5 L1313 257.5 V260 H1303.5 Z" fill="#111"/>
<text x="1326" y="248.5" font-size="13" fill="#555">Svg-snowglobe-car...</text>
<text x="1326" y="265.5" font-size="13" fill="#8f8f8f">Basic Cut</text>
<circle cx="1308.3" cy="300" r="6.6" fill="#fff" stroke="#555" stroke-width="1.1"/><path d="M1302.5 305.5 Q1308.3 307.5 1314 305.5 L1314.5 312 H1302 Z" fill="#f6f6f6" stroke="#bdbdbd" stroke-width="0.8"/>
<text x="1326" y="298" font-size="13" fill="#555">Svg-snowglobe-car...</text>
<text x="1326" y="315" font-size="13" fill="#8f8f8f">Basic Cut</text>
<path d="M1300.6 355.5 A9.8 9.3 0 1 1 1316 355.5 Q1308.3 360.5 1300.6 355.5 Z" fill="#2cf24f" stroke="#35a04a" stroke-width="0.8"/>
<text x="1326" y="347.5" font-size="13" fill="#555">Svg-snowglobe-car...</text>
<text x="1326" y="364.5" font-size="13" fill="#8f8f8f">Basic Cut</text>
<path d="M1300.6 405 A9.8 9.3 0 1 1 1316 405 Q1308.3 410 1300.6 405 Z" fill="#0a3f9f" stroke="#173070" stroke-width="0.8"/>
<text x="1326" y="397" font-size="13" fill="#555">Svg-snowglobe-car...</text>
<text x="1326" y="414" font-size="13" fill="#8f8f8f">Basic Cut</text>
<circle cx="1308" cy="446.3" r="6.3" fill="#fff" stroke="#5a3030" stroke-width="1.3"/><path d="M1303 451.5 Q1308 453.5 1313 451.5 L1314.3 459.5 H1301.7 Z" fill="#ff0c0c" stroke="#7a1010" stroke-width="0.5"/>
<text x="1326" y="446" font-size="13" fill="#555">Svg-snowglobe-car...</text>
<text x="1326" y="463" font-size="13" fill="#8f8f8f">Basic Cut</text>
<path d="M1302 508.5 V502 L1303.5 500.5 A7.3 7.3 0 1 1 1313.5 500.5 L1315 502 V508.5 Z" fill="#f6f6f6" stroke="#a8a8a8" stroke-width="1.1"/>
<text x="1326" y="495.5" font-size="13" fill="#555">Svg-snowglobe-car...</text>
<text x="1326" y="512.5" font-size="13" fill="#8f8f8f">Basic Cut</text>
<path d="M1299 556 V550 A5.3 5.3 0 0 1 1308.5 546 A5.3 5.3 0 0 1 1318 550 V556 Z" fill="#f6f6f6" stroke="#a8a8a8" stroke-width="1.1"/><path d="M1308.5 549 Q1306.5 553 1308.5 556 Q1310.5 553 1308.5 549" fill="none" stroke="#777" stroke-width="0.9"/>
<text x="1326" y="545" font-size="13" fill="#555">Svg-snowglobe-car...</text>
<text x="1326" y="562" font-size="13" fill="#8f8f8f">Basic Cut</text>
<rect x="1237.3" y="718" width="262.7" height="45" fill="#f2f2f2"/>
<rect x="1247.5" y="725" width="46" height="31" rx="2.5" fill="#fff" stroke="#9a9a9a" stroke-width="1"/>
<text x="1302.5" y="744.5" font-size="9.4" fill="#444">Blank Canvas</text>
<path d="M1257 780 A6 6 0 1 1 1266.5 770.5" fill="none" stroke="#c8c8c8" stroke-width="1.3"/><path d="M1262.5 775.5 H1269.5 V783.5 H1261.5 V778" fill="none" stroke="#c8c8c8" stroke-width="1.3"/><path d="M1258.5 776 L1265.5 774 L1263.5 781 Z" fill="none" stroke="#c8c8c8" stroke-width="1.2" stroke-linejoin="round"/>
<rect x="1293" y="769" width="9" height="9" fill="none" stroke="#c8c8c8" stroke-width="1.2"/><circle cx="1301" cy="777.5" r="5" fill="#fff" stroke="#c8c8c8" stroke-width="1.2"/><path d="M1314 775 L1319 775 L1316.5 778 Z" fill="#c8c8c8"/>
<rect x="1343" y="772" width="17" height="7" rx="3.5" fill="none" stroke="#c8c8c8" stroke-width="1.2"/><rect x="1346" y="774" width="11" height="3" rx="1.5" fill="none" stroke="#c8c8c8" stroke-width="1.1"/>
<path d="M1386 776 L1393 781 L1400 776 M1386 772 L1393 777 L1400 772 M1393 768 V774 M1390.5 771.5 L1393 774 L1395.5 771.5" fill="none" stroke="#c8c8c8" stroke-width="1.2"/>
<circle cx="1439" cy="776" r="8.5" fill="none" stroke="#c8c8c8" stroke-width="1.3" stroke-dasharray="3 2.3"/>
<text x="1262" y="798.5" font-size="10" fill="#cbcbcb" text-anchor="middle">Slice</text>
<text x="1305" y="798.5" font-size="10" fill="#cbcbcb" text-anchor="middle">Combine</text>
<text x="1351.5" y="798.5" font-size="10" fill="#cbcbcb" text-anchor="middle">Attach</text>
<text x="1393.5" y="798.5" font-size="10" fill="#cbcbcb" text-anchor="middle">Flatten</text>
<text x="1439" y="798.5" font-size="10" fill="#cbcbcb" text-anchor="middle">Contour</text>
<rect x="1220" y="85" width="16" height="706" fill="#f0f0f0"/>
<rect x="1221" y="100" width="12.5" height="29" fill="#c2c2c2"/>
<path d="M1223.5 94.5 L1230.5 94.5 L1227 91 Z" fill="#9a9a9a"/>
<path d="M1223.5 781.5 L1230.5 781.5 L1227 785.5 Z" fill="#222"/>
<rect x="60" y="791" width="1160" height="15" fill="#f0f0f0"/>
<rect x="75.5" y="792" width="81" height="12.5" fill="#c0c0c0"/>
<path d="M69 795 L69 801.5 L65.5 798.2 Z" fill="#9a9a9a"/>
<path d="M1210 795 L1210 801.5 L1214 798.2 Z" fill="#222"/>
<rect x="1220" y="791" width="14" height="15" fill="#dcdcdc"/>
<rect x="90" y="754.5" width="101" height="28.5" rx="14" fill="#000" fill-opacity="0.07"/>
<circle cx="102.7" cy="768.8" r="8.3" fill="none" stroke="#c4c4c4" stroke-width="1.3"/><path d="M98.5 768.8 H107" stroke="#c4c4c4" stroke-width="1.3"/>
<text x="118.5" y="775.3" font-size="17" fill="#bdbdbd">100%</text>
<circle cx="178.9" cy="768.8" r="8.3" fill="none" stroke="#c4c4c4" stroke-width="1.3"/><path d="M174.5 768.8 H183.3 M178.9 764.4 V773.2" stroke="#c4c4c4" stroke-width="1.3"/>
<rect x="0" y="40" width="60" height="766" fill="#cccccc"/>
</svg>
<div class="abs" style="left:0;top:0;width:60px;height:806px"><svg class="abs" style="left:0;top:0" width="60" height="806"><rect x="3" y="535.5" width="55" height="56" fill="#cecece"/><circle cx="29" cy="61.2" r="8.3" fill="none" stroke="#343a42" stroke-width="1.6"/><path d="M29 56.5V66M24.3 61.2H33.7" stroke="#343a42" stroke-width="1.6"/><path d="M25.3 114.3 L20.6 118.4 L22.8 121.3 L24.4 120.2 V130.8 H34.3 V120.2 L35.9 121.3 L38.1 118.4 L33.4 114.3 C31.8 116 26.9 116 25.3 114.3 Z" fill="none" stroke="#343a42" stroke-width="1.4" stroke-linejoin="round"/><circle cx="27.2" cy="118.6" r="0.7" fill="#343a42"/><circle cx="31" cy="118.6" r="0.7" fill="#343a42"/><circle cx="27.2" cy="122.7" r="0.7" fill="#343a42"/><circle cx="31" cy="122.7" r="0.7" fill="#343a42"/><path d="M23.8 178.5 L32 176.3 L33 178.5 M23.8 178.5 L35 178.5 L35 193 L23.8 193 Z" fill="none" stroke="#343a42" stroke-width="1.4" stroke-linejoin="round"/><path d="M29.4 186.5 L26.9 184 C26 183 26.9 181.5 28 181.8 C28.7 182 29.2 182.5 29.4 183 C29.6 182.5 30.1 182 30.8 181.8 C31.9 181.5 32.8 183 31.9 184 Z" fill="none" stroke="#343a42" stroke-width="1.1"/><path d="M26.5 189.5H32.3" stroke="#343a42" stroke-width="1.2"/><path d="M26.8 238 L20.5 249 L33 249 Z" fill="none" stroke="#343a42" stroke-width="1.4" stroke-linejoin="round"/><path d="M28.5 249 A5.6 5.6 0 1 0 31 244" fill="none" stroke="#343a42" stroke-width="1.4"/><path d="M29 298 C24 298 22.3 301.5 22.3 304 C22.3 307.5 25.5 309.5 26.8 311 L31.2 311 C32.5 309.5 35.7 307.5 35.7 304 C35.7 301.5 34 298 29 298 Z" fill="none" stroke="#343a42" stroke-width="1.4"/><path d="M29 298 C26.5 300 26.3 308 27.5 311 M29 298 C31.5 300 31.7 308 30.5 311" fill="none" stroke="#343a42" stroke-width="1.1"/><rect x="26.8" y="312" width="4.4" height="4" fill="none" stroke="#343a42" stroke-width="1.3"/><text x="29" y="376.5" text-anchor="middle" font-family="Liberation Serif" font-size="19" fill="#343a42">T</text><path d="M36.5 431 A7.3 6.8 0 1 0 33.5 436.8 L37 438.5 Z" fill="none" stroke="#343a42" stroke-width="1.5" stroke-linejoin="round"/><path d="M25.5 429.2H32.5M25.5 432.6H32.5" stroke="#343a42" stroke-width="1.3"/><path d="M30.6 482.3 H33.3 M35.1 484 V491.5 M25.9 493.3 H33.3 M24.1 487.3 V491.5" fill="none" stroke="#343a42" stroke-width="1.3"/><path d="M25.9 477.6 C25.9 481 24.5 482.6 20.5 483.3 C24.5 484 26.5 484.8 28.8 486.4 C27 483.5 26.3 481 25.9 477.6 Z" fill="#343a42"/><circle cx="35.1" cy="482.2" r="1.8" fill="#cccccc" stroke="#343a42" stroke-width="1.3"/><circle cx="35.1" cy="493.3" r="1.8" fill="#cccccc" stroke="#343a42" stroke-width="1.3"/><circle cx="24.1" cy="493.3" r="1.8" fill="#cccccc" stroke="#343a42" stroke-width="1.3"/><path d="M22.5 547.5H35.5" stroke="#343a42" stroke-width="1.6"/><path d="M29 563.5V551.5M24.5 556 L29 551.5 L33.5 556" fill="none" stroke="#343a42" stroke-width="1.6"/><path d="M19.5 611.5H38.5" stroke="#343a42" stroke-width="1.4"/><path d="M20.5 627 V615 M20.5 615 C22.5 613 24.5 614 24.5 617 V627 M24.5 617 C25.5 613 28.5 614 28.5 617 V627" fill="none" stroke="#343a42" stroke-width="1.5"/><path d="M37.5 616 C36 613.5 31 613.5 30.5 618.5 V622 C31 627 36.5 627.5 37.8 624 V620.5 H34" fill="none" stroke="#343a42" stroke-width="1.6"/></svg><div class="si" style="top:75px">New</div><div class="si" style="top:137px">Templates</div><div class="si" style="top:198px">Projects</div><div class="si" style="top:260px">Shapes</div><div class="si" style="top:322px">Images</div><div class="si" style="top:383px">Text</div><div class="si" style="top:445px">Phrases</div><div class="si" style="top:568px">Upload</div><div class="si" style="top:630px">Monogram</div><div class="si" style="top:504px">Editable</div><div class="si" style="top:517px">Images</div></div>
<svg class="abs" style="left:0;top:0" width="1500" height="41" font-family="Liberation Sans, sans-serif">
  <rect x="0" y="0" width="1500" height="39" fill="#40444b"/>
  <rect x="0" y="38" width="1500" height="1" fill="#474b52"/>
  <rect x="0" y="39" width="1500" height="1.8" fill="#050608"/>
  <rect x="18.5" y="12" width="21.5" height="2.2" rx="1" fill="#f2f2f2"/>
  <rect x="18.5" y="17.5" width="21.5" height="2.2" rx="1" fill="#f2f2f2"/>
  <rect x="18.5" y="23" width="21.5" height="2.2" rx="1" fill="#f2f2f2"/>
  <g fill="#f2f2f2" font-size="15">
  <text x="60" y="24" textLength="48" lengthAdjust="spacingAndGlyphs">Canvas</text>
  <text x="510" y="24" textLength="57.3" lengthAdjust="spacingAndGlyphs">Untitled*</text>
  <text x="969" y="24" textLength="89" lengthAdjust="spacingAndGlyphs">Learning Plan</text>
  <rect x="1080.3" y="13" width="1.5" height="12" fill="#f2f2f2"/>
  <text x="1139" y="24" textLength="54" lengthAdjust="spacingAndGlyphs">My Stuff</text>
  <text x="1204" y="24" textLength="31" lengthAdjust="spacingAndGlyphs">Save</text>
  <rect x="1258" y="13" width="1.5" height="12" fill="#f2f2f2"/>
  <text x="1282.5" y="24" textLength="38" lengthAdjust="spacingAndGlyphs">Maker</text>
  </g>
  <path d="M1112 24.5 C1113.3 22.5 1113.5 20.5 1113.5 18 A5.5 5.5 0 0 1 1124.5 18 C1124.5 20.5 1124.7 22.5 1126 24.5 Z" fill="none" stroke="#f2f2f2" stroke-width="1.4" stroke-linejoin="round"/>
  <path d="M1116.5 25.5 A2.5 2.5 0 0 0 1121.5 25.5" fill="none" stroke="#f2f2f2" stroke-width="1.3"/>
  <circle cx="1118" cy="8" r="6.5" fill="#d92c1c"/>
  <text x="1118" y="11.5" font-size="9.5" font-weight="bold" fill="#fff" text-anchor="middle">2</text>
  <path d="M1330.5 16.5 L1336.5 22.5 L1342.5 16.5" fill="none" stroke="#f2f2f2" stroke-width="1.6"/>
  <rect x="1375" y="4" width="117" height="29" rx="14.5" fill="#0b8561"/>
  <text x="1415.4" y="22.5" font-size="11.5" font-weight="bold" fill="#f4f4f4" textLength="36.4" lengthAdjust="spacingAndGlyphs">Make It</text>
</svg>
<svg class="abs" style="left:0;top:0" width="120" height="806"><ellipse cx="59.5" cy="757.3" rx="49.5" ry="38.3" fill="#c83b1e"/>
<g fill="#fff" font-family="Liberation Serif" font-style="italic">
<text x="19.5" y="757" font-size="32" textLength="16">C</text>
<text x="35" y="756.5" font-size="20" textLength="39" lengthAdjust="spacingAndGlyphs">raft</text>
<text x="27" y="781.5" font-size="32" textLength="17">S</text>
<text x="44" y="781" font-size="20" textLength="45" lengthAdjust="spacingAndGlyphs">arah</text>
</g>
<text x="79.5" y="748.5" font-family="Liberation Serif" font-size="7" font-weight="bold" fill="#fff" textLength="18" lengthAdjust="spacingAndGlyphs">WITH</text>
<path d="M78 754 Q84 751 90 752.5 Q96 754 99.5 751" fill="none" stroke="#fff" stroke-width="1.3"/>
<path d="M60 765 Q66 757 76 760 Q86 764 93 759 Q96 756 92 755" fill="none" stroke="#fff" stroke-width="1"/>
<path d="M62 762 Q58 767 64 768" fill="none" stroke="#fff" stroke-width="0.9"/></svg>
</body></html>
